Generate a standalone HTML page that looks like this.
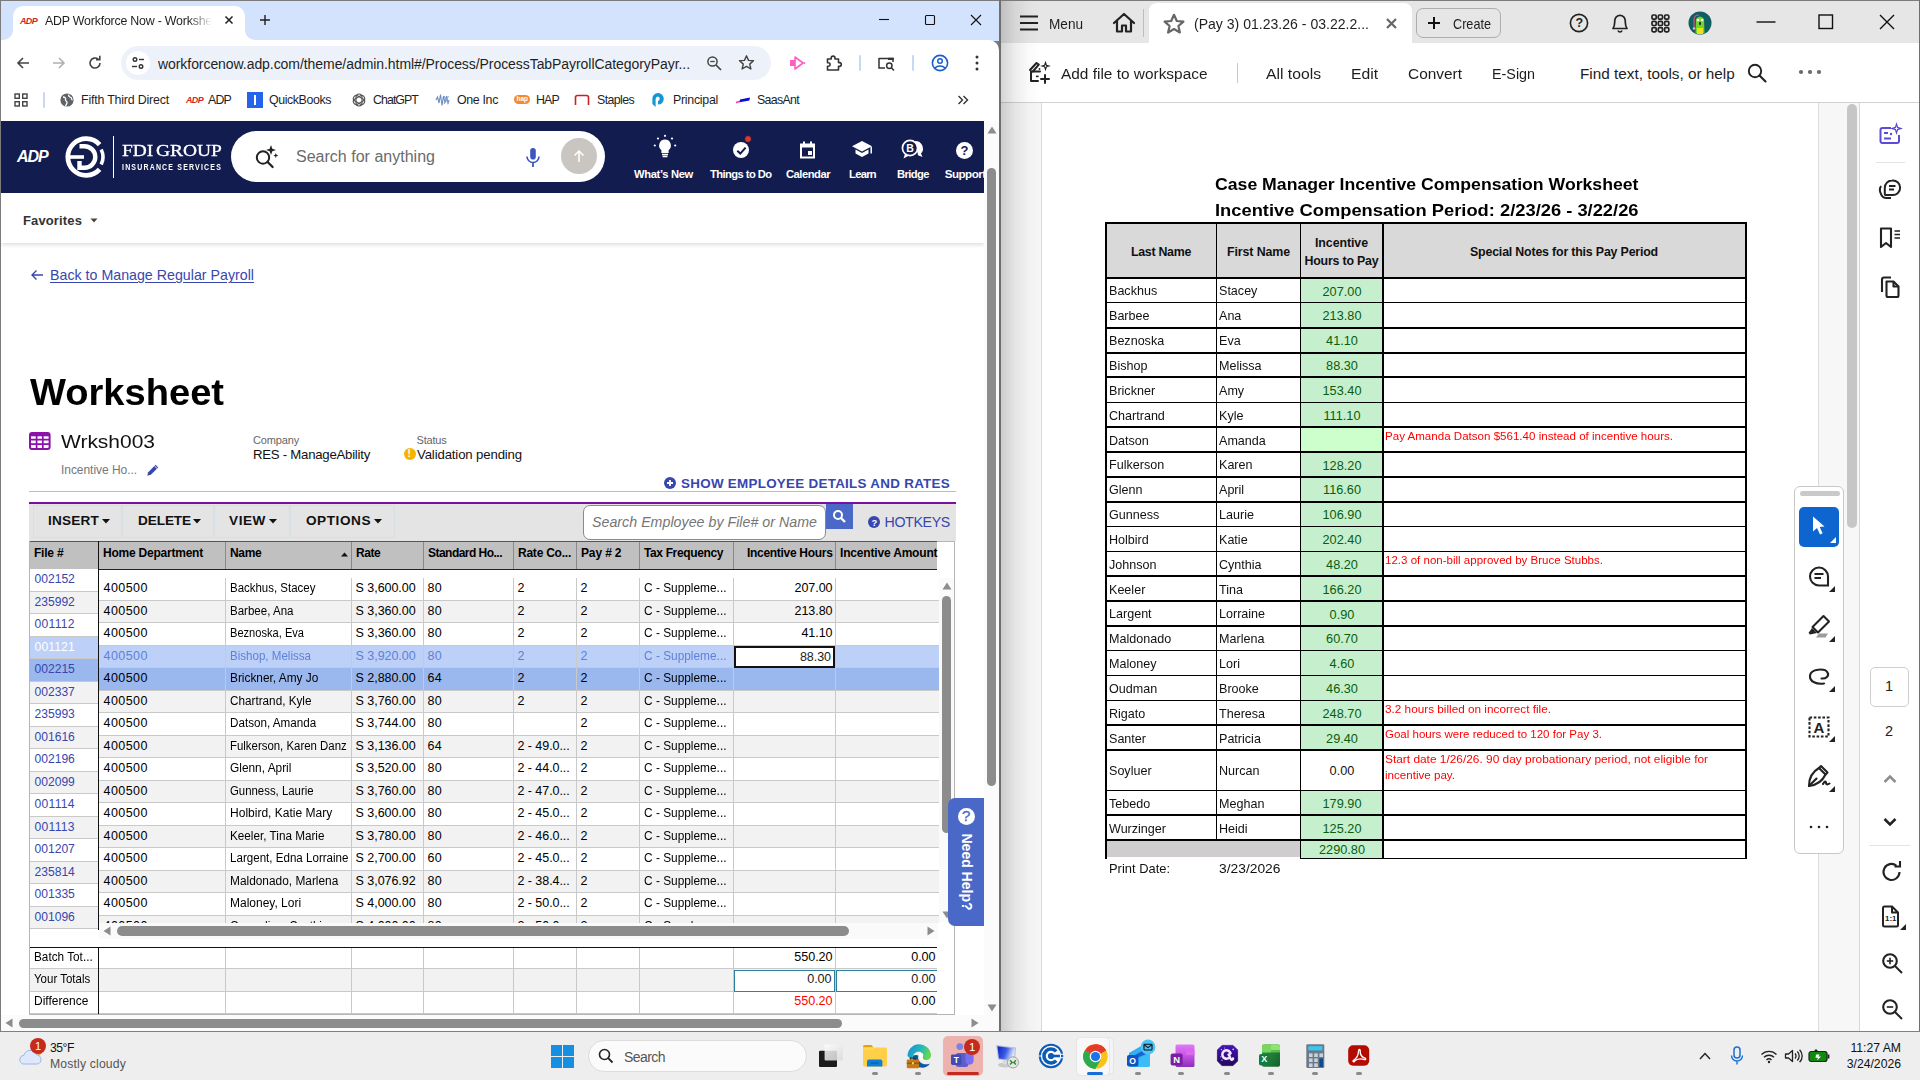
<!DOCTYPE html>
<html lang="en"><head><meta charset="utf-8"><title>ADP Workforce Now - Worksheet</title>
<style>
html,body{margin:0;padding:0;}
body{width:1920px;height:1080px;overflow:hidden;position:relative;background:#7b7b7b;font-family:"Liberation Sans",sans-serif;}
.b{position:absolute;box-sizing:border-box;}
div.b{box-sizing:content-box;}
.t{position:absolute;white-space:pre;}
svg.b{overflow:visible;}
</style></head><body>
<!-- chrome_top -->
<div class="b" style="left:0px;top:0px;width:1000px;height:41px;background:#d3e3fd;"></div>
<div class="b" style="left:1px;top:40px;width:998px;height:81px;background:#fff;border-radius:0 10px 0 0;"></div>
<div class="b" style="left:13px;top:6px;width:232px;height:35px;background:#fff;border-radius:10px 10px 0 0;"></div>
<svg class="b" style="left:3px;top:30px;" width="10" height="10" viewBox="0 0 10 10"><path d="M10 0 V10 H0 A10 10 0 0 0 10 0Z" fill="#fff"/></svg>
<svg class="b" style="left:245px;top:30px;" width="10" height="10" viewBox="0 0 10 10"><path d="M0 0 V10 H10 A10 10 0 0 1 0 0Z" fill="#fff"/></svg>
<svg class="b" style="left:224px;top:15px;" width="10" height="10" viewBox="0 0 10 10"><path d="M1.5 1.5 L8.5 8.5 M8.5 1.5 L1.5 8.5" stroke="#1f1f1f" stroke-width="1.5"/></svg>
<svg class="b" style="left:259px;top:14px;" width="12" height="12" viewBox="0 0 12 12"><path d="M6 1 V11 M1 6 H11" stroke="#1f1f1f" stroke-width="1.4"/></svg>
<svg class="b" style="left:878px;top:14px;" width="12" height="12" viewBox="0 0 12 12"><path d="M1 5.5 H11" stroke="#111" stroke-width="1.1"/></svg>
<svg class="b" style="left:924px;top:14px;" width="12" height="12" viewBox="0 0 12 12"><rect x="1.5" y="1.5" width="9" height="9" rx="1" fill="none" stroke="#111" stroke-width="1.1"/></svg>
<svg class="b" style="left:970px;top:14px;" width="12" height="12" viewBox="0 0 12 12"><path d="M1 1 L11 11 M11 1 L1 11" stroke="#111" stroke-width="1.1"/></svg>
<svg class="b" style="left:15px;top:55px;" width="16" height="16" viewBox="0 0 16 16"><path d="M14 8 H3 M8 3 L3 8 L8 13" fill="none" stroke="#444" stroke-width="1.6"/></svg>
<svg class="b" style="left:51px;top:55px;" width="16" height="16" viewBox="0 0 16 16"><path d="M2 8 H13 M8 3 L13 8 L8 13" fill="none" stroke="#b0b0b0" stroke-width="1.6"/></svg>
<svg class="b" style="left:87px;top:55px;" width="16" height="16" viewBox="0 0 16 16"><path d="M13 8 A5 5 0 1 1 11.2 4.2" fill="none" stroke="#444" stroke-width="1.6"/><path d="M9 4.6 H12.8 V0.8" fill="none" stroke="#444" stroke-width="1.6"/></svg>
<div class="b" style="left:121px;top:46px;width:650px;height:34px;background:#edf2fa;border-radius:17px;"></div>
<div class="b" style="left:126px;top:51px;width:24px;height:24px;background:#fff;border-radius:12px;"></div>
<svg class="b" style="left:131px;top:56px;" width="14" height="14" viewBox="0 0 14 14"><circle cx="4" cy="3.5" r="1.8" fill="none" stroke="#333" stroke-width="1.4"/><path d="M8 3.5 H13" stroke="#333" stroke-width="1.4"/><circle cx="10" cy="10.5" r="1.8" fill="none" stroke="#333" stroke-width="1.4"/><path d="M1 10.5 H6" stroke="#333" stroke-width="1.4"/></svg>
<svg class="b" style="left:706px;top:55px;" width="16" height="16" viewBox="0 0 16 16"><circle cx="6.5" cy="6.5" r="4.6" fill="none" stroke="#444" stroke-width="1.5"/><path d="M10 10 L15 15" stroke="#444" stroke-width="1.7"/><path d="M4.3 6.5 H8.7" stroke="#444" stroke-width="1.3"/></svg>
<svg class="b" style="left:738px;top:54px;" width="17" height="17" viewBox="0 0 17 17"><path d="M8.5 1.8 L10.5 6.4 L15.5 6.8 L11.7 10.1 L12.9 15 L8.5 12.4 L4.1 15 L5.3 10.1 L1.5 6.8 L6.5 6.4 Z" fill="none" stroke="#444" stroke-width="1.4" stroke-linejoin="round"/></svg>
<svg class="b" style="left:788px;top:55px;" width="18" height="16" viewBox="0 0 18 16"><path d="M2 5 H7 V11 H2 Z" fill="#ff5fc4"/><path d="M7 2 L15 8 L7 14 Z" fill="none" stroke="#ff5fc4" stroke-width="1.6" stroke-linejoin="round"/><circle cx="16.3" cy="8" r="1" fill="#ff5fc4"/></svg>
<svg class="b" style="left:825px;top:54px;" width="18" height="18" viewBox="0 0 18 18"><path d="M2.5 5 H6.2 V4 A1.9 1.9 0 0 1 10 4 V5 H13.5 V8.6 H14.4 A1.9 1.9 0 0 1 14.4 12.4 H13.5 V16 H2.5 V12.3 H3.3 A1.8 1.8 0 0 0 3.3 8.7 H2.5 Z" fill="none" stroke="#333" stroke-width="1.6" stroke-linejoin="round"/></svg>
<div class="b" style="left:859px;top:55px;width:2px;height:16px;background:#c7d7f5;border-radius:1px;"></div>
<svg class="b" style="left:877px;top:55px;" width="19" height="17" viewBox="0 0 19 17"><path d="M2 3.5 H16 V7" fill="none" stroke="#333" stroke-width="1.5"/><path d="M11 2.8 H16.7 V5 H11Z" fill="#333"/><path d="M2 3 V13 H8" fill="none" stroke="#333" stroke-width="1.5"/><circle cx="12.3" cy="10.7" r="2.7" fill="none" stroke="#333" stroke-width="1.5"/><path d="M14.3 12.7 L17 15.5" stroke="#333" stroke-width="1.5"/></svg>
<div class="b" style="left:912px;top:55px;width:2px;height:16px;background:#c7d7f5;border-radius:1px;"></div>
<svg class="b" style="left:931px;top:54px;" width="18" height="18" viewBox="0 0 18 18"><circle cx="9" cy="9" r="7.6" fill="none" stroke="#1a5fd0" stroke-width="1.6"/><circle cx="9" cy="7" r="2.3" fill="none" stroke="#1a5fd0" stroke-width="1.5"/><path d="M3.8 14 A6.5 5 0 0 1 14.2 14" fill="none" stroke="#1a5fd0" stroke-width="1.5"/></svg>
<svg class="b" style="left:974px;top:55px;" width="6" height="16" viewBox="0 0 6 16"><circle cx="3" cy="2" r="1.5" fill="#333"/><circle cx="3" cy="8" r="1.5" fill="#333"/><circle cx="3" cy="14" r="1.5" fill="#333"/></svg>
<svg class="b" style="left:14px;top:93px;" width="14" height="14" viewBox="0 0 14 14"><g fill="none" stroke="#444" stroke-width="1.4"><rect x="1" y="1" width="4.3" height="4.3"/><rect x="8.7" y="1" width="4.3" height="4.3"/><rect x="1" y="8.7" width="4.3" height="4.3"/><rect x="8.7" y="8.7" width="4.3" height="4.3"/></g></svg>
<div class="b" style="left:43px;top:92px;width:2px;height:16px;background:#c7d7f5;border-radius:1px;"></div>
<svg class="b" style="left:60px;top:93px;" width="14" height="14" viewBox="0 0 14 14"><circle cx="7" cy="7" r="6.6" fill="#5f6368"/><path d="M3 4 C5 4 6 5 5.5 6.5 C5 8 7 8 7 9.5 C7 11 6 12 5.5 13 M9 1.5 C8 3 9.5 4 11 4.5 C12 5 11 6.5 12.5 7" fill="none" stroke="#fff" stroke-width="1.3"/></svg>
<div class="b" style="left:247px;top:92px;width:16px;height:16px;background:#2563eb;"></div>
<div class="b" style="left:254px;top:95px;width:2px;height:10px;background:#fff;"></div>
<svg class="b" style="left:352px;top:93px;" width="14" height="14" viewBox="0 0 14 14"><g fill="none" stroke="#555" stroke-width="1.15"><rect x="4" y="1" width="6" height="12" rx="3"/><rect x="4" y="1" width="6" height="12" rx="3" transform="rotate(60 7 7)"/><rect x="4" y="1" width="6" height="12" rx="3" transform="rotate(120 7 7)"/></g></svg>
<svg class="b" style="left:435px;top:93px;" width="15" height="14" viewBox="0 0 15 14"><g fill="none" stroke="#6c8ebf" stroke-width="1.1"><path d="M1 7 L2.5 4 L4 10 L5.5 1.5 L7 12.5 L8.5 3 L10 10 L11.5 3 L13 10 L14 7"/><path d="M9 3 L13.5 11 M13.5 3 L9 11" stroke="#8fa9cf"/></g></svg>
<div class="b" style="left:514px;top:95px;width:16px;height:9px;background:#f28c28;border-radius:5px;"></div>
<svg class="b" style="left:574px;top:94px;" width="16" height="12" viewBox="0 0 16 12"><path d="M1.5 11 V3.5 Q1.5 1.5 3.5 1.5 H12.5 Q14.5 1.5 14.5 3.5 V11" fill="none" stroke="#cc1f1f" stroke-width="1.6"/></svg>
<svg class="b" style="left:651px;top:92px;" width="14" height="16" viewBox="0 0 14 16"><path d="M7 1 A5.8 5.8 0 0 1 7 12.6 L7 9 A2.4 2.4 0 0 0 7 4.4 A2.6 2.6 0 0 0 4.6 7 V15 L1.4 12 V6.8 A5.7 5.7 0 0 1 7 1 Z" fill="#1596d1"/></svg>
<svg class="b" style="left:735px;top:95px;" width="16" height="10" viewBox="0 0 16 10"><path d="M1 7.6 L5 6.2" stroke="#ff3db5" stroke-width="1.7"/><path d="M5 4.4 L15 2.6 L14.4 5.4 L4.6 7.2Z" fill="#0a0adc"/></svg>
<svg class="b" style="left:957px;top:95px;" width="12" height="10" viewBox="0 0 12 10"><path d="M1.5 1 L5.5 5 L1.5 9 M6.5 1 L10.5 5 L6.5 9" fill="none" stroke="#333" stroke-width="1.4"/></svg>
<span class="t" style="left:20px;top:16.50px;font:italic bold 9px/9px 'Liberation Sans',sans-serif;color:#d0271d;letter-spacing:-0.672px;">ADP</span>
<span class="t" style="left:45px;top:14.80px;font:normal normal 12.4px/12.4px 'Liberation Sans',sans-serif;color:#1f1f1f;letter-spacing:-0.216px;-webkit-mask-image:linear-gradient(90deg,#000 86%,transparent 100%);mask-image:linear-gradient(90deg,#000 86%,transparent 100%);">ADP Workforce Now - Workshe</span>
<span class="t" style="left:158px;top:56.50px;font:normal normal 14px/14px 'Liberation Sans',sans-serif;color:#1f1f1f;letter-spacing:-0.062px;">workforcenow.adp.com/theme/admin.html#/Process/ProcessTabPayrollCategoryPayr...</span>
<span class="t" style="left:81px;top:93.80px;font:normal normal 12.4px/12.4px 'Liberation Sans',sans-serif;color:#1f1f1f;letter-spacing:-0.187px;">Fifth Third Direct</span>
<span class="t" style="left:186px;top:95.50px;font:italic bold 9px/9px 'Liberation Sans',sans-serif;color:#d0271d;letter-spacing:-0.672px;">ADP</span>
<span class="t" style="left:208px;top:93.80px;font:normal normal 12.4px/12.4px 'Liberation Sans',sans-serif;color:#1f1f1f;letter-spacing:-0.828px;">ADP</span>
<span class="t" style="left:269px;top:93.80px;font:normal normal 12.4px/12.4px 'Liberation Sans',sans-serif;color:#1f1f1f;letter-spacing:-0.412px;">QuickBooks</span>
<span class="t" style="left:373px;top:93.80px;font:normal normal 12.4px/12.4px 'Liberation Sans',sans-serif;color:#1f1f1f;letter-spacing:-0.951px;">ChatGPT</span>
<span class="t" style="left:457px;top:93.80px;font:normal normal 12.4px/12.4px 'Liberation Sans',sans-serif;color:#1f1f1f;letter-spacing:-0.344px;">One Inc</span>
<span class="t" style="left:516.5px;top:96.05px;font:normal bold 6.5px/6.5px 'Liberation Sans',sans-serif;color:#fff;">hap</span>
<span class="t" style="left:536px;top:93.80px;font:normal normal 12.4px/12.4px 'Liberation Sans',sans-serif;color:#1f1f1f;letter-spacing:-0.828px;">HAP</span>
<span class="t" style="left:597px;top:93.80px;font:normal normal 12.4px/12.4px 'Liberation Sans',sans-serif;color:#1f1f1f;letter-spacing:-0.621px;">Staples</span>
<span class="t" style="left:673px;top:93.80px;font:normal normal 12.4px/12.4px 'Liberation Sans',sans-serif;color:#1f1f1f;letter-spacing:-0.281px;">Principal</span>
<span class="t" style="left:757px;top:93.80px;font:normal normal 12.4px/12.4px 'Liberation Sans',sans-serif;color:#1f1f1f;letter-spacing:-0.692px;">SaasAnt</span>
<!-- adp_head -->
<div class="b" style="left:1px;top:121px;width:998px;height:910px;background:#fff;"></div>
<div class="b" style="left:1px;top:121px;width:983px;height:72px;background:#121c4e;"></div>
<svg class="b" style="left:63.2px;top:135px;" width="44" height="44" viewBox="0 0 44 44"><g fill="none" stroke="#fff"><path d="M36.6 9.6 A18.3 18.3 0 1 0 36.6 34.4" stroke-width="4.8"/><path d="M38.2 14.5 A17 17 0 0 1 38.2 29.5" stroke-width="3.6"/><path d="M3.5 22 H21" stroke-width="3.6"/><path d="M16.5 11.2 H21.5 A10.8 10.8 0 0 1 21.5 32.8 H16.5 V26" stroke-width="4.4"/></g></svg>
<div class="b" style="left:113px;top:136px;width:1px;height:42px;background:#fff;"></div>
<div class="b" style="left:231px;top:131px;width:374px;height:51px;background:#fff;border-radius:26px;"></div>
<svg class="b" style="left:254px;top:144px;" width="26" height="26" viewBox="0 0 26 26"><circle cx="9" cy="13.5" r="6.2" fill="none" stroke="#222" stroke-width="2"/><path d="M13.6 18 L18.6 23" stroke="#222" stroke-width="2.3" stroke-linecap="round"/><path d="M17 1 L18.3 4.7 L22 6 L18.3 7.3 L17 11 L15.7 7.3 L12 6 L15.7 4.7 Z" fill="#222"/><path d="M21.8 9 L22.5 10.8 L24.3 11.5 L22.5 12.2 L21.8 14 L21.1 12.2 L19.3 11.5 L21.1 10.8 Z" fill="#222"/></svg>
<svg class="b" style="left:525px;top:147px;" width="16" height="22" viewBox="0 0 16 22"><rect x="5.2" y="1" width="5.6" height="11.5" rx="2.8" fill="#3d56c0"/><path d="M2 9.5 A6 6 0 0 0 14 9.5" fill="none" stroke="#3d56c0" stroke-width="1.6"/><path d="M8 15.5 V20" stroke="#3d56c0" stroke-width="1.8"/></svg>
<div class="b" style="left:561px;top:138px;width:36px;height:36px;background:#c9c5c1;border-radius:18px;"></div>
<svg class="b" style="left:571px;top:148px;" width="16" height="16" viewBox="0 0 16 16"><path d="M8 14 V3 M3.5 7.5 L8 3 L12.5 7.5" fill="none" stroke="#fff" stroke-width="1.5"/></svg>
<svg class="b" style="left:651.5px;top:134px;" width="26" height="28" viewBox="0 0 26 28"><path d="M13 5.5 A6 6 0 0 1 16.6 16.2 V19 H9.4 V16.2 A6 6 0 0 1 13 5.5Z" fill="#fff"/><path d="M10 20.5 H16 M10.6 22.5 H15.4" stroke="#fff" stroke-width="1.5"/><g fill="#fff"><circle cx="13" cy="1.8" r="1.1"/><circle cx="6" cy="4.5" r="1.1"/><circle cx="20" cy="4.5" r="1.1"/><circle cx="2.8" cy="11.5" r="1.1"/><circle cx="23.2" cy="11.5" r="1.1"/></g></svg>
<div class="b" style="left:732.5px;top:141.5px;width:16.5px;height:16.5px;background:#fff;border-radius:9px;"></div>
<svg class="b" style="left:732.5px;top:141.5px;" width="17" height="17" viewBox="0 0 17 17"><path d="M4.3 8.8 L7.3 11.6 L12.6 5.6" fill="none" stroke="#121c4e" stroke-width="2"/></svg>
<div class="b" style="left:743.6px;top:135.2px;width:8.2px;height:8.2px;background:#d93a2b;border-radius:5px;border:1px solid #121c4e;box-sizing:border-box;"></div>
<svg class="b" style="left:799px;top:141px;" width="17" height="18" viewBox="0 0 17 18"><path d="M2 3.5 H15 V16.5 H2 Z" fill="none" stroke="#fff" stroke-width="2"/><path d="M2 3 H15 V6.5 H2Z" fill="#fff"/><path d="M5 0.5 V4 M12 0.5 V4" stroke="#fff" stroke-width="2"/><rect x="9" y="10" width="4" height="4" fill="#fff"/></svg>
<svg class="b" style="left:851px;top:140px;" width="22" height="18" viewBox="0 0 22 18"><path d="M11 1 L21 6.3 L11 11.6 L1 6.3 Z" fill="#fff"/><path d="M4.5 9.5 V13.5 L11 17 L17.5 13.5 V9.5 L11 13 Z" fill="#fff"/><path d="M20.2 6.8 V13.5" stroke="#fff" stroke-width="1.5"/></svg>
<svg class="b" style="left:900px;top:138px;" width="24" height="22" viewBox="0 0 24 22"><path d="M15 3 A7.5 7.5 0 0 1 21 15.5 L22.5 19 L18 17.2" fill="#fff"/><circle cx="10" cy="10" r="7.6" fill="#121c4e" stroke="#fff" stroke-width="1.7"/><path d="M5 16 L3.5 20.5 L9 17.5" fill="#fff"/></svg>
<div class="b" style="left:956px;top:141.5px;width:17px;height:17px;background:#fff;border-radius:9px;"></div>
<div class="b" style="left:944px;top:165px;width:40px;height:18px;overflow:hidden;"><span class="t" style="left:0.7px;top:2.7px;font:bold 11.6px/11.6px 'Liberation Sans',sans-serif;color:#fff;letter-spacing:-0.5px;">Support</span></div>
<div class="b" style="left:1px;top:193px;width:983px;height:50px;background:#fff;box-shadow:0 2px 4px rgba(0,0,0,0.13);"></div>
<svg class="b" style="left:90px;top:218px;" width="8" height="5" viewBox="0 0 8 5"><path d="M0.5 0.5 H7.5 L4 4.5Z" fill="#444"/></svg>
<svg class="b" style="left:30px;top:269px;" width="14" height="12" viewBox="0 0 14 12"><path d="M13 6 H2 M6.5 1.5 L2 6 L6.5 10.5" fill="none" stroke="#3747ad" stroke-width="1.4"/></svg>
<svg class="b" style="left:29px;top:432px;" width="22" height="18" viewBox="0 0 22 18"><rect x="1" y="1" width="19.6" height="16" rx="2" fill="#fff" stroke="#8a12a8" stroke-width="2"/><path d="M1.5 3 H20.2" stroke="#8a12a8" stroke-width="2.6"/><path d="M1 7.6 H20.6 M1 12.2 H20.6 M7.6 4 V17 M13.8 4 V17" stroke="#8a12a8" stroke-width="1.7"/></svg>
<svg class="b" style="left:146px;top:463px;" width="14" height="14" viewBox="0 0 14 14"><path d="M1.2 12.8 L2.2 9.2 L9.6 1.8 L12.2 4.4 L4.8 11.8 Z" fill="#3747ad"/><path d="M8.6 3 L11 5.4" stroke="#fff" stroke-width="0.9"/></svg>
<div class="b" style="left:403.5px;top:448px;width:12px;height:12px;background:#f5b400;border-radius:6px;"></div>
<div class="b" style="left:664px;top:477px;width:12px;height:12px;background:#3747ad;border-radius:6px;"></div>
<svg class="b" style="left:664px;top:477px;" width="12" height="12" viewBox="0 0 12 12"><path d="M6 3 V9 M3 6 H9" stroke="#fff" stroke-width="1.8"/></svg>
<div class="b" style="left:29px;top:491px;width:927px;height:1px;background:#bdbdbd;"></div>
<div class="b" style="left:29px;top:502px;width:927px;height:2px;background:#7b0fa0;"></div>
<div class="b" style="left:29px;top:504px;width:927px;height:37px;background:#e4e4e4;"></div>
<div class="b" style="left:33px;top:505px;width:88.5px;height:33px;border:1px solid #d6e0e4;box-sizing:border-box;"></div>
<div class="b" style="left:122px;top:505px;width:91.5px;height:33px;border:1px solid #d6e0e4;box-sizing:border-box;"></div>
<div class="b" style="left:214px;top:505px;width:75.5px;height:33px;border:1px solid #d6e0e4;box-sizing:border-box;"></div>
<div class="b" style="left:290px;top:505px;width:104.7px;height:33px;border:1px solid #d6e0e4;box-sizing:border-box;"></div>
<svg class="b" style="left:102px;top:518.5px;" width="9" height="5.5" viewBox="0 0 9 5.5"><path d="M0 0 H8 L4 4.6Z" fill="#111"/></svg>
<svg class="b" style="left:193px;top:518.5px;" width="9" height="5.5" viewBox="0 0 9 5.5"><path d="M0 0 H8 L4 4.6Z" fill="#111"/></svg>
<svg class="b" style="left:269px;top:518.5px;" width="9" height="5.5" viewBox="0 0 9 5.5"><path d="M0 0 H8 L4 4.6Z" fill="#111"/></svg>
<svg class="b" style="left:374px;top:518.5px;" width="9" height="5.5" viewBox="0 0 9 5.5"><path d="M0 0 H8 L4 4.6Z" fill="#111"/></svg>
<div class="b" style="left:583px;top:504.6px;width:243px;height:35.2px;background:#fff;border:1px solid #8a8a8a;border-radius:7px;box-sizing:border-box;"></div>
<div class="b" style="left:826px;top:504px;width:27px;height:25px;background:#4a68c8;"></div>
<svg class="b" style="left:832px;top:509px;" width="15" height="15" viewBox="0 0 15 15"><circle cx="6" cy="6" r="4" fill="none" stroke="#fff" stroke-width="2"/><path d="M9 9 L13 13" stroke="#fff" stroke-width="2.4"/></svg>
<div class="b" style="left:868px;top:516px;width:12px;height:12px;background:#3747ad;border-radius:6px;"></div>
<div class="b" style="left:948px;top:798px;width:36px;height:128px;background:#4a68c8;border-radius:7px 0 0 7px;z-index:5;"></div>
<div class="b" style="left:957.5px;top:807.5px;width:17px;height:17px;background:#fff;border-radius:9px;z-index:6;"></div>
<span class="t" style="left:17px;top:149.00px;font:italic bold 16px/16px 'Liberation Sans',sans-serif;color:#fff;letter-spacing:-0.260px;letter-spacing:-1px;">ADP</span>
<span class="t" style="left:121.5px;top:141.90px;font:normal normal 17.4px/17.4px 'Liberation Serif',serif;color:#fff;transform:scaleX(1.1169);transform-origin:left center;-webkit-text-stroke:0.35px #fff;word-spacing:-2px;">FDI GROUP</span>
<span class="t" style="left:122px;top:161.60px;font:normal bold 9.4px/9.4px 'Liberation Sans',sans-serif;color:#fff;transform:scaleX(0.7441);transform-origin:left center;letter-spacing:1.6px;">INSURANCE SERVICES</span>
<span class="t" style="left:296px;top:149.00px;font:normal normal 16px/16px 'Liberation Sans',sans-serif;color:#6b6b6b;letter-spacing:0.013px;">Search for anything</span>
<span class="t" style="left:634px;top:168.50px;font:normal bold 11.2px/11.2px 'Liberation Sans',sans-serif;color:#fff;letter-spacing:-0.338px;">What’s New</span>
<span class="t" style="left:710px;top:168.50px;font:normal bold 11.2px/11.2px 'Liberation Sans',sans-serif;color:#fff;letter-spacing:-0.572px;">Things to Do</span>
<span class="t" style="left:786px;top:168.50px;font:normal bold 11.2px/11.2px 'Liberation Sans',sans-serif;color:#fff;letter-spacing:-0.484px;">Calendar</span>
<span class="t" style="left:849px;top:168.50px;font:normal bold 11.2px/11.2px 'Liberation Sans',sans-serif;color:#fff;letter-spacing:-0.694px;">Learn</span>
<span class="t" style="left:906.2px;top:142.95px;font:normal bold 10.5px/10.5px 'Liberation Sans',sans-serif;color:#fff;">B</span>
<span class="t" style="left:897px;top:168.50px;font:normal bold 11.2px/11.2px 'Liberation Sans',sans-serif;color:#fff;letter-spacing:-0.573px;">Bridge</span>
<span class="t" style="left:960.6px;top:143.80px;font:normal bold 13px/13px 'Liberation Sans',sans-serif;color:#121c4e;">?</span>
<span class="t" style="left:23px;top:214.00px;font:normal bold 13px/13px 'Liberation Sans',sans-serif;color:#333;letter-spacing:0.132px;">Favorites</span>
<span class="t" style="left:50px;top:268.40px;font:normal normal 14.2px/14.2px 'Liberation Sans',sans-serif;color:#3747ad;letter-spacing:0.018px;text-decoration:underline;text-underline-offset:2px;">Back to Manage Regular Payroll</span>
<span class="t" style="left:29.5px;top:374.70px;font:normal bold 36.6px/36.6px 'Liberation Sans',sans-serif;color:#000;transform:scaleX(1.0411);transform-origin:left center;">Worksheet</span>
<span class="t" style="left:61px;top:431.70px;font:normal normal 19.2px/19.2px 'Liberation Sans',sans-serif;color:#111;transform:scaleX(1.0926);transform-origin:left center;">Wrksh003</span>
<span class="t" style="left:61px;top:463.50px;font:normal normal 12px/12px 'Liberation Sans',sans-serif;color:#777;letter-spacing:-0.048px;">Incentive Ho...</span>
<span class="t" style="left:253px;top:435.00px;font:normal normal 11px/11px 'Liberation Sans',sans-serif;color:#666;letter-spacing:-0.154px;">Company</span>
<span class="t" style="left:253px;top:448.40px;font:normal normal 13.2px/13.2px 'Liberation Sans',sans-serif;color:#111;letter-spacing:-0.246px;">RES - ManageAbility</span>
<span class="t" style="left:416.5px;top:435.00px;font:normal normal 11px/11px 'Liberation Sans',sans-serif;color:#666;letter-spacing:-0.198px;">Status</span>
<span class="t" style="left:407.6px;top:449.30px;font:normal bold 10px/10px 'Liberation Sans',sans-serif;color:#fff;">!</span>
<span class="t" style="left:417px;top:448.40px;font:normal normal 13.2px/13.2px 'Liberation Sans',sans-serif;color:#111;letter-spacing:-0.141px;">Validation pending</span>
<span class="t" style="left:681px;top:476.80px;font:normal bold 13.4px/13.4px 'Liberation Sans',sans-serif;color:#3747ad;letter-spacing:0.286px;">SHOW EMPLOYEE DETAILS AND RATES</span>
<span class="t" style="left:48px;top:514.10px;font:normal bold 13.6px/13.6px 'Liberation Sans',sans-serif;color:#111;letter-spacing:0.190px;">INSERT</span>
<span class="t" style="left:138px;top:514.10px;font:normal bold 13.6px/13.6px 'Liberation Sans',sans-serif;color:#111;letter-spacing:-0.104px;">DELETE</span>
<span class="t" style="left:229px;top:514.10px;font:normal bold 13.6px/13.6px 'Liberation Sans',sans-serif;color:#111;letter-spacing:0.562px;">VIEW</span>
<span class="t" style="left:306px;top:514.10px;font:normal bold 13.6px/13.6px 'Liberation Sans',sans-serif;color:#111;letter-spacing:0.545px;">OPTIONS</span>
<span class="t" style="left:592px;top:514.90px;font:italic normal 14.2px/14.2px 'Liberation Sans',sans-serif;color:#757575;letter-spacing:0.033px;">Search Employee by File# or Name</span>
<span class="t" style="left:871.6px;top:517.55px;font:normal bold 9.5px/9.5px 'Liberation Sans',sans-serif;color:#fff;">?</span>
<span class="t" style="left:884.5px;top:514.90px;font:normal normal 14.2px/14.2px 'Liberation Sans',sans-serif;color:#3747ad;letter-spacing:-0.330px;">HOTKEYS</span>
<span class="t" style="left:966px;top:808.45px;transform:translateX(-50%);font:normal normal 15.5px/15.5px 'Liberation Sans',sans-serif;color:#4a68c8;z-index:7;-webkit-text-stroke:0.3px #4a68c8;">?</span>
<span class="t" style="left:966.5px;top:865.00px;font:normal bold 14px/14px 'Liberation Sans',sans-serif;color:#fff;transform:translate(-50%,0) rotate(90deg);transform-origin:center;z-index:7;">Need Help?</span>
<!-- adp_grid -->
<div class="b" style="left:29px;top:541px;width:926px;height:474px;border:1px solid #b5b5b5;box-sizing:border-box;"></div>
<div class="b" style="left:30px;top:541px;width:907px;height:29px;background:#c0c0c0;"></div>
<div class="b" style="left:225px;top:542px;width:1px;height:28px;background:#8a8a8a;"></div>
<div class="b" style="left:351px;top:542px;width:1px;height:28px;background:#8a8a8a;"></div>
<div class="b" style="left:423px;top:542px;width:1px;height:28px;background:#8a8a8a;"></div>
<div class="b" style="left:513px;top:542px;width:1px;height:28px;background:#8a8a8a;"></div>
<div class="b" style="left:576px;top:542px;width:1px;height:28px;background:#8a8a8a;"></div>
<div class="b" style="left:639px;top:542px;width:1px;height:28px;background:#8a8a8a;"></div>
<div class="b" style="left:733px;top:542px;width:1px;height:28px;background:#8a8a8a;"></div>
<div class="b" style="left:835px;top:542px;width:1px;height:28px;background:#8a8a8a;"></div>
<svg class="b" style="left:341px;top:552px;" width="7" height="5" viewBox="0 0 7 5"><path d="M0 4.5 H7 L3.5 0.5Z" fill="#111"/></svg>
<div class="b" style="left:30px;top:541px;width:907px;height:1px;background:#555;"></div>
<div class="b" style="left:30px;top:568.5px;width:907px;height:1.5px;background:#222;"></div>
<div class="b" style="left:30px;top:569.3px;width:68px;height:22.5px;background:#fff;border-bottom:1px solid #c9c9c9;box-sizing:border-box;"></div>
<div class="b" style="left:30px;top:591.8px;width:68px;height:22.5px;background:#f2f2f2;border-bottom:1px solid #c9c9c9;box-sizing:border-box;"></div>
<div class="b" style="left:30px;top:614.3px;width:68px;height:22.5px;background:#fff;border-bottom:1px solid #c9c9c9;box-sizing:border-box;"></div>
<div class="b" style="left:30px;top:636.8px;width:68px;height:22.5px;background:#bdd0f7;border-bottom:1px solid #c9c9c9;box-sizing:border-box;"></div>
<div class="b" style="left:30px;top:659.3px;width:68px;height:22.5px;background:#9ab7ee;border-bottom:1px solid #c9c9c9;box-sizing:border-box;"></div>
<div class="b" style="left:30px;top:681.8px;width:68px;height:22.5px;background:#f2f2f2;border-bottom:1px solid #c9c9c9;box-sizing:border-box;"></div>
<div class="b" style="left:30px;top:704.3px;width:68px;height:22.5px;background:#fff;border-bottom:1px solid #c9c9c9;box-sizing:border-box;"></div>
<div class="b" style="left:30px;top:726.8px;width:68px;height:22.5px;background:#f2f2f2;border-bottom:1px solid #c9c9c9;box-sizing:border-box;"></div>
<div class="b" style="left:30px;top:749.3px;width:68px;height:22.5px;background:#fff;border-bottom:1px solid #c9c9c9;box-sizing:border-box;"></div>
<div class="b" style="left:30px;top:771.8px;width:68px;height:22.5px;background:#f2f2f2;border-bottom:1px solid #c9c9c9;box-sizing:border-box;"></div>
<div class="b" style="left:30px;top:794.3px;width:68px;height:22.5px;background:#fff;border-bottom:1px solid #c9c9c9;box-sizing:border-box;"></div>
<div class="b" style="left:30px;top:816.8px;width:68px;height:22.5px;background:#f2f2f2;border-bottom:1px solid #c9c9c9;box-sizing:border-box;"></div>
<div class="b" style="left:30px;top:839.3px;width:68px;height:22.5px;background:#fff;border-bottom:1px solid #c9c9c9;box-sizing:border-box;"></div>
<div class="b" style="left:30px;top:861.8px;width:68px;height:22.5px;background:#f2f2f2;border-bottom:1px solid #c9c9c9;box-sizing:border-box;"></div>
<div class="b" style="left:30px;top:884.3px;width:68px;height:22.5px;background:#fff;border-bottom:1px solid #c9c9c9;box-sizing:border-box;"></div>
<div class="b" style="left:30px;top:906.8px;width:68px;height:22.5px;background:#f2f2f2;border-bottom:1px solid #c9c9c9;box-sizing:border-box;"></div>
<div class="b" style="left:99px;top:570px;width:840px;height:352.5px;overflow:hidden;"><div class="b" style="left:0px;top:8.3px;width:840px;height:22.5px;background:#fff;border-bottom:1px solid #c9c9c9;box-sizing:border-box;"></div><div class="b" style="left:0px;top:30.8px;width:840px;height:22.5px;background:#f2f2f2;border-bottom:1px solid #c9c9c9;box-sizing:border-box;"></div><div class="b" style="left:0px;top:53.3px;width:840px;height:22.5px;background:#fff;border-bottom:1px solid #c9c9c9;box-sizing:border-box;"></div><div class="b" style="left:0px;top:75.8px;width:840px;height:22.5px;background:#bdd0f7;border-bottom:1px solid #c9c9c9;box-sizing:border-box;"></div><div class="b" style="left:0px;top:98.3px;width:840px;height:22.5px;background:#9ab7ee;border-bottom:1px solid #c9c9c9;box-sizing:border-box;"></div><div class="b" style="left:0px;top:120.8px;width:840px;height:22.5px;background:#f2f2f2;border-bottom:1px solid #c9c9c9;box-sizing:border-box;"></div><div class="b" style="left:0px;top:143.3px;width:840px;height:22.5px;background:#fff;border-bottom:1px solid #c9c9c9;box-sizing:border-box;"></div><div class="b" style="left:0px;top:165.8px;width:840px;height:22.5px;background:#f2f2f2;border-bottom:1px solid #c9c9c9;box-sizing:border-box;"></div><div class="b" style="left:0px;top:188.3px;width:840px;height:22.5px;background:#fff;border-bottom:1px solid #c9c9c9;box-sizing:border-box;"></div><div class="b" style="left:0px;top:210.8px;width:840px;height:22.5px;background:#f2f2f2;border-bottom:1px solid #c9c9c9;box-sizing:border-box;"></div><div class="b" style="left:0px;top:233.3px;width:840px;height:22.5px;background:#fff;border-bottom:1px solid #c9c9c9;box-sizing:border-box;"></div><div class="b" style="left:0px;top:255.8px;width:840px;height:22.5px;background:#f2f2f2;border-bottom:1px solid #c9c9c9;box-sizing:border-box;"></div><div class="b" style="left:0px;top:278.3px;width:840px;height:22.5px;background:#fff;border-bottom:1px solid #c9c9c9;box-sizing:border-box;"></div><div class="b" style="left:0px;top:300.8px;width:840px;height:22.5px;background:#f2f2f2;border-bottom:1px solid #c9c9c9;box-sizing:border-box;"></div><div class="b" style="left:0px;top:323.3px;width:840px;height:22.5px;background:#fff;border-bottom:1px solid #c9c9c9;box-sizing:border-box;"></div><div class="b" style="left:0px;top:345.8px;width:840px;height:22.5px;background:#f2f2f2;border-bottom:1px solid #c9c9c9;box-sizing:border-box;"></div><div class="b" style="left:126px;top:8.3px;width:1px;height:360.0px;background:#c9c9c9;"></div><div class="b" style="left:252px;top:8.3px;width:1px;height:360.0px;background:#c9c9c9;"></div><div class="b" style="left:324px;top:8.3px;width:1px;height:360.0px;background:#c9c9c9;"></div><div class="b" style="left:414px;top:8.3px;width:1px;height:360.0px;background:#c9c9c9;"></div><div class="b" style="left:477px;top:8.3px;width:1px;height:360.0px;background:#c9c9c9;"></div><div class="b" style="left:540px;top:8.3px;width:1px;height:360.0px;background:#c9c9c9;"></div><div class="b" style="left:634px;top:8.3px;width:1px;height:360.0px;background:#c9c9c9;"></div><div class="b" style="left:736px;top:8.3px;width:1px;height:360.0px;background:#c9c9c9;"></div><div class="b" style="left:635px;top:76px;width:101px;height:22px;background:#fff;border:2px solid #111;box-sizing:border-box;"></div><span class="t" style="left:4.5px;top:12.25px;font:normal normal 12.5px/12.5px 'Liberation Sans',sans-serif;color:#000;letter-spacing:0.430px;">400500</span><span class="t" style="left:130.6px;top:12.25px;font:normal normal 12.5px/12.5px 'Liberation Sans',sans-serif;color:#000;transform:scaleX(0.9172);transform-origin:left center;">Backhus, Stacey</span><span class="t" style="left:256.6px;top:12.25px;font:normal normal 12.5px/12.5px 'Liberation Sans',sans-serif;color:#000;letter-spacing:-0.048px;">S 3,600.00</span><span class="t" style="left:328.6px;top:12.25px;font:normal normal 12.5px/12.5px 'Liberation Sans',sans-serif;color:#000;letter-spacing:0.197px;">80</span><span class="t" style="left:418.6px;top:12.25px;font:normal normal 12.5px/12.5px 'Liberation Sans',sans-serif;color:#000;letter-spacing:0.447px;">2</span><span class="t" style="left:481.6px;top:12.25px;font:normal normal 12.5px/12.5px 'Liberation Sans',sans-serif;color:#000;letter-spacing:0.447px;">2</span><span class="t" style="left:544.6px;top:12.25px;font:normal normal 12.5px/12.5px 'Liberation Sans',sans-serif;color:#000;transform:scaleX(0.9500);transform-origin:left center;">C - Suppleme...</span><span class="t" style="right:106.5px;top:12.25px;font:normal normal 12.5px/12.5px 'Liberation Sans',sans-serif;color:#000;letter-spacing:-0.051px;">207.00</span><span class="t" style="left:4.5px;top:34.75px;font:normal normal 12.5px/12.5px 'Liberation Sans',sans-serif;color:#000;letter-spacing:0.430px;">400500</span><span class="t" style="left:130.6px;top:34.75px;font:normal normal 12.5px/12.5px 'Liberation Sans',sans-serif;color:#000;transform:scaleX(0.9228);transform-origin:left center;">Barbee, Ana</span><span class="t" style="left:256.6px;top:34.75px;font:normal normal 12.5px/12.5px 'Liberation Sans',sans-serif;color:#000;letter-spacing:-0.048px;">S 3,360.00</span><span class="t" style="left:328.6px;top:34.75px;font:normal normal 12.5px/12.5px 'Liberation Sans',sans-serif;color:#000;letter-spacing:0.197px;">80</span><span class="t" style="left:418.6px;top:34.75px;font:normal normal 12.5px/12.5px 'Liberation Sans',sans-serif;color:#000;letter-spacing:0.447px;">2</span><span class="t" style="left:481.6px;top:34.75px;font:normal normal 12.5px/12.5px 'Liberation Sans',sans-serif;color:#000;letter-spacing:0.447px;">2</span><span class="t" style="left:544.6px;top:34.75px;font:normal normal 12.5px/12.5px 'Liberation Sans',sans-serif;color:#000;transform:scaleX(0.9500);transform-origin:left center;">C - Suppleme...</span><span class="t" style="right:106.5px;top:34.75px;font:normal normal 12.5px/12.5px 'Liberation Sans',sans-serif;color:#000;letter-spacing:-0.051px;">213.80</span><span class="t" style="left:4.5px;top:57.25px;font:normal normal 12.5px/12.5px 'Liberation Sans',sans-serif;color:#000;letter-spacing:0.430px;">400500</span><span class="t" style="left:130.6px;top:57.25px;font:normal normal 12.5px/12.5px 'Liberation Sans',sans-serif;color:#000;transform:scaleX(0.8874);transform-origin:left center;">Beznoska, Eva</span><span class="t" style="left:256.6px;top:57.25px;font:normal normal 12.5px/12.5px 'Liberation Sans',sans-serif;color:#000;letter-spacing:-0.048px;">S 3,360.00</span><span class="t" style="left:328.6px;top:57.25px;font:normal normal 12.5px/12.5px 'Liberation Sans',sans-serif;color:#000;letter-spacing:0.197px;">80</span><span class="t" style="left:418.6px;top:57.25px;font:normal normal 12.5px/12.5px 'Liberation Sans',sans-serif;color:#000;letter-spacing:0.447px;">2</span><span class="t" style="left:481.6px;top:57.25px;font:normal normal 12.5px/12.5px 'Liberation Sans',sans-serif;color:#000;letter-spacing:0.447px;">2</span><span class="t" style="left:544.6px;top:57.25px;font:normal normal 12.5px/12.5px 'Liberation Sans',sans-serif;color:#000;transform:scaleX(0.9500);transform-origin:left center;">C - Suppleme...</span><span class="t" style="right:106.5px;top:57.25px;font:normal normal 12.5px/12.5px 'Liberation Sans',sans-serif;color:#000;letter-spacing:-0.050px;">41.10</span><span class="t" style="left:4.5px;top:79.75px;font:normal normal 12.5px/12.5px 'Liberation Sans',sans-serif;color:#5f80d8;letter-spacing:0.430px;">400500</span><span class="t" style="left:130.6px;top:79.75px;font:normal normal 12.5px/12.5px 'Liberation Sans',sans-serif;color:#5f80d8;transform:scaleX(0.9252);transform-origin:left center;">Bishop, Melissa</span><span class="t" style="left:256.6px;top:79.75px;font:normal normal 12.5px/12.5px 'Liberation Sans',sans-serif;color:#5f80d8;letter-spacing:-0.048px;">S 3,920.00</span><span class="t" style="left:328.6px;top:79.75px;font:normal normal 12.5px/12.5px 'Liberation Sans',sans-serif;color:#5f80d8;letter-spacing:0.197px;">80</span><span class="t" style="left:418.6px;top:79.75px;font:normal normal 12.5px/12.5px 'Liberation Sans',sans-serif;color:#5f80d8;letter-spacing:0.447px;">2</span><span class="t" style="left:481.6px;top:79.75px;font:normal normal 12.5px/12.5px 'Liberation Sans',sans-serif;color:#5f80d8;letter-spacing:0.447px;">2</span><span class="t" style="left:544.6px;top:79.75px;font:normal normal 12.5px/12.5px 'Liberation Sans',sans-serif;color:#5f80d8;transform:scaleX(0.9500);transform-origin:left center;">C - Suppleme...</span><span class="t" style="left:4.5px;top:102.25px;font:normal normal 12.5px/12.5px 'Liberation Sans',sans-serif;color:#000;letter-spacing:0.430px;">400500</span><span class="t" style="left:130.6px;top:102.25px;font:normal normal 12.5px/12.5px 'Liberation Sans',sans-serif;color:#000;transform:scaleX(0.9485);transform-origin:left center;">Brickner, Amy Jo</span><span class="t" style="left:256.6px;top:102.25px;font:normal normal 12.5px/12.5px 'Liberation Sans',sans-serif;color:#000;letter-spacing:-0.048px;">S 2,880.00</span><span class="t" style="left:328.6px;top:102.25px;font:normal normal 12.5px/12.5px 'Liberation Sans',sans-serif;color:#000;letter-spacing:0.197px;">64</span><span class="t" style="left:418.6px;top:102.25px;font:normal normal 12.5px/12.5px 'Liberation Sans',sans-serif;color:#000;letter-spacing:0.447px;">2</span><span class="t" style="left:481.6px;top:102.25px;font:normal normal 12.5px/12.5px 'Liberation Sans',sans-serif;color:#000;letter-spacing:0.447px;">2</span><span class="t" style="left:544.6px;top:102.25px;font:normal normal 12.5px/12.5px 'Liberation Sans',sans-serif;color:#000;transform:scaleX(0.9500);transform-origin:left center;">C - Suppleme...</span><span class="t" style="left:4.5px;top:124.75px;font:normal normal 12.5px/12.5px 'Liberation Sans',sans-serif;color:#000;letter-spacing:0.430px;">400500</span><span class="t" style="left:130.6px;top:124.75px;font:normal normal 12.5px/12.5px 'Liberation Sans',sans-serif;color:#000;transform:scaleX(0.9383);transform-origin:left center;">Chartrand, Kyle</span><span class="t" style="left:256.6px;top:124.75px;font:normal normal 12.5px/12.5px 'Liberation Sans',sans-serif;color:#000;letter-spacing:-0.048px;">S 3,760.00</span><span class="t" style="left:328.6px;top:124.75px;font:normal normal 12.5px/12.5px 'Liberation Sans',sans-serif;color:#000;letter-spacing:0.197px;">80</span><span class="t" style="left:418.6px;top:124.75px;font:normal normal 12.5px/12.5px 'Liberation Sans',sans-serif;color:#000;letter-spacing:0.447px;">2</span><span class="t" style="left:481.6px;top:124.75px;font:normal normal 12.5px/12.5px 'Liberation Sans',sans-serif;color:#000;letter-spacing:0.447px;">2</span><span class="t" style="left:544.6px;top:124.75px;font:normal normal 12.5px/12.5px 'Liberation Sans',sans-serif;color:#000;transform:scaleX(0.9500);transform-origin:left center;">C - Suppleme...</span><span class="t" style="left:4.5px;top:147.25px;font:normal normal 12.5px/12.5px 'Liberation Sans',sans-serif;color:#000;letter-spacing:0.430px;">400500</span><span class="t" style="left:130.6px;top:147.25px;font:normal normal 12.5px/12.5px 'Liberation Sans',sans-serif;color:#000;transform:scaleX(0.9327);transform-origin:left center;">Datson, Amanda</span><span class="t" style="left:256.6px;top:147.25px;font:normal normal 12.5px/12.5px 'Liberation Sans',sans-serif;color:#000;letter-spacing:-0.048px;">S 3,744.00</span><span class="t" style="left:328.6px;top:147.25px;font:normal normal 12.5px/12.5px 'Liberation Sans',sans-serif;color:#000;letter-spacing:0.197px;">80</span><span class="t" style="left:481.6px;top:147.25px;font:normal normal 12.5px/12.5px 'Liberation Sans',sans-serif;color:#000;letter-spacing:0.447px;">2</span><span class="t" style="left:544.6px;top:147.25px;font:normal normal 12.5px/12.5px 'Liberation Sans',sans-serif;color:#000;transform:scaleX(0.9500);transform-origin:left center;">C - Suppleme...</span><span class="t" style="left:4.5px;top:169.75px;font:normal normal 12.5px/12.5px 'Liberation Sans',sans-serif;color:#000;letter-spacing:0.430px;">400500</span><span class="t" style="left:130.6px;top:169.75px;font:normal normal 12.5px/12.5px 'Liberation Sans',sans-serif;color:#000;transform:scaleX(0.9128);transform-origin:left center;">Fulkerson, Karen Danz</span><span class="t" style="left:256.6px;top:169.75px;font:normal normal 12.5px/12.5px 'Liberation Sans',sans-serif;color:#000;letter-spacing:-0.048px;">S 3,136.00</span><span class="t" style="left:328.6px;top:169.75px;font:normal normal 12.5px/12.5px 'Liberation Sans',sans-serif;color:#000;letter-spacing:0.197px;">64</span><span class="t" style="left:418.6px;top:169.75px;font:normal normal 12.5px/12.5px 'Liberation Sans',sans-serif;color:#000;letter-spacing:-0.072px;">2 - 49.0...</span><span class="t" style="left:481.6px;top:169.75px;font:normal normal 12.5px/12.5px 'Liberation Sans',sans-serif;color:#000;letter-spacing:0.447px;">2</span><span class="t" style="left:544.6px;top:169.75px;font:normal normal 12.5px/12.5px 'Liberation Sans',sans-serif;color:#000;transform:scaleX(0.9500);transform-origin:left center;">C - Suppleme...</span><span class="t" style="left:4.5px;top:192.25px;font:normal normal 12.5px/12.5px 'Liberation Sans',sans-serif;color:#000;letter-spacing:0.430px;">400500</span><span class="t" style="left:130.6px;top:192.25px;font:normal normal 12.5px/12.5px 'Liberation Sans',sans-serif;color:#000;transform:scaleX(0.9501);transform-origin:left center;">Glenn, April</span><span class="t" style="left:256.6px;top:192.25px;font:normal normal 12.5px/12.5px 'Liberation Sans',sans-serif;color:#000;letter-spacing:-0.048px;">S 3,520.00</span><span class="t" style="left:328.6px;top:192.25px;font:normal normal 12.5px/12.5px 'Liberation Sans',sans-serif;color:#000;letter-spacing:0.197px;">80</span><span class="t" style="left:418.6px;top:192.25px;font:normal normal 12.5px/12.5px 'Liberation Sans',sans-serif;color:#000;letter-spacing:-0.072px;">2 - 44.0...</span><span class="t" style="left:481.6px;top:192.25px;font:normal normal 12.5px/12.5px 'Liberation Sans',sans-serif;color:#000;letter-spacing:0.447px;">2</span><span class="t" style="left:544.6px;top:192.25px;font:normal normal 12.5px/12.5px 'Liberation Sans',sans-serif;color:#000;transform:scaleX(0.9500);transform-origin:left center;">C - Suppleme...</span><span class="t" style="left:4.5px;top:214.75px;font:normal normal 12.5px/12.5px 'Liberation Sans',sans-serif;color:#000;letter-spacing:0.430px;">400500</span><span class="t" style="left:130.6px;top:214.75px;font:normal normal 12.5px/12.5px 'Liberation Sans',sans-serif;color:#000;transform:scaleX(0.9113);transform-origin:left center;">Gunness, Laurie</span><span class="t" style="left:256.6px;top:214.75px;font:normal normal 12.5px/12.5px 'Liberation Sans',sans-serif;color:#000;letter-spacing:-0.048px;">S 3,760.00</span><span class="t" style="left:328.6px;top:214.75px;font:normal normal 12.5px/12.5px 'Liberation Sans',sans-serif;color:#000;letter-spacing:0.197px;">80</span><span class="t" style="left:418.6px;top:214.75px;font:normal normal 12.5px/12.5px 'Liberation Sans',sans-serif;color:#000;letter-spacing:-0.072px;">2 - 47.0...</span><span class="t" style="left:481.6px;top:214.75px;font:normal normal 12.5px/12.5px 'Liberation Sans',sans-serif;color:#000;letter-spacing:0.447px;">2</span><span class="t" style="left:544.6px;top:214.75px;font:normal normal 12.5px/12.5px 'Liberation Sans',sans-serif;color:#000;transform:scaleX(0.9500);transform-origin:left center;">C - Suppleme...</span><span class="t" style="left:4.5px;top:237.25px;font:normal normal 12.5px/12.5px 'Liberation Sans',sans-serif;color:#000;letter-spacing:0.430px;">400500</span><span class="t" style="left:130.6px;top:237.25px;font:normal normal 12.5px/12.5px 'Liberation Sans',sans-serif;color:#000;transform:scaleX(0.9624);transform-origin:left center;">Holbird, Katie Mary</span><span class="t" style="left:256.6px;top:237.25px;font:normal normal 12.5px/12.5px 'Liberation Sans',sans-serif;color:#000;letter-spacing:-0.048px;">S 3,600.00</span><span class="t" style="left:328.6px;top:237.25px;font:normal normal 12.5px/12.5px 'Liberation Sans',sans-serif;color:#000;letter-spacing:0.197px;">80</span><span class="t" style="left:418.6px;top:237.25px;font:normal normal 12.5px/12.5px 'Liberation Sans',sans-serif;color:#000;letter-spacing:-0.072px;">2 - 45.0...</span><span class="t" style="left:481.6px;top:237.25px;font:normal normal 12.5px/12.5px 'Liberation Sans',sans-serif;color:#000;letter-spacing:0.447px;">2</span><span class="t" style="left:544.6px;top:237.25px;font:normal normal 12.5px/12.5px 'Liberation Sans',sans-serif;color:#000;transform:scaleX(0.9500);transform-origin:left center;">C - Suppleme...</span><span class="t" style="left:4.5px;top:259.75px;font:normal normal 12.5px/12.5px 'Liberation Sans',sans-serif;color:#000;letter-spacing:0.430px;">400500</span><span class="t" style="left:130.6px;top:259.75px;font:normal normal 12.5px/12.5px 'Liberation Sans',sans-serif;color:#000;transform:scaleX(0.9380);transform-origin:left center;">Keeler, Tina Marie</span><span class="t" style="left:256.6px;top:259.75px;font:normal normal 12.5px/12.5px 'Liberation Sans',sans-serif;color:#000;letter-spacing:-0.048px;">S 3,780.00</span><span class="t" style="left:328.6px;top:259.75px;font:normal normal 12.5px/12.5px 'Liberation Sans',sans-serif;color:#000;letter-spacing:0.197px;">80</span><span class="t" style="left:418.6px;top:259.75px;font:normal normal 12.5px/12.5px 'Liberation Sans',sans-serif;color:#000;letter-spacing:-0.072px;">2 - 46.0...</span><span class="t" style="left:481.6px;top:259.75px;font:normal normal 12.5px/12.5px 'Liberation Sans',sans-serif;color:#000;letter-spacing:0.447px;">2</span><span class="t" style="left:544.6px;top:259.75px;font:normal normal 12.5px/12.5px 'Liberation Sans',sans-serif;color:#000;transform:scaleX(0.9500);transform-origin:left center;">C - Suppleme...</span><span class="t" style="left:4.5px;top:282.25px;font:normal normal 12.5px/12.5px 'Liberation Sans',sans-serif;color:#000;letter-spacing:0.430px;">400500</span><span class="t" style="left:130.6px;top:282.25px;font:normal normal 12.5px/12.5px 'Liberation Sans',sans-serif;color:#000;transform:scaleX(0.9267);transform-origin:left center;">Largent, Edna Lorraine</span><span class="t" style="left:256.6px;top:282.25px;font:normal normal 12.5px/12.5px 'Liberation Sans',sans-serif;color:#000;letter-spacing:-0.048px;">S 2,700.00</span><span class="t" style="left:328.6px;top:282.25px;font:normal normal 12.5px/12.5px 'Liberation Sans',sans-serif;color:#000;letter-spacing:0.197px;">60</span><span class="t" style="left:418.6px;top:282.25px;font:normal normal 12.5px/12.5px 'Liberation Sans',sans-serif;color:#000;letter-spacing:-0.072px;">2 - 45.0...</span><span class="t" style="left:481.6px;top:282.25px;font:normal normal 12.5px/12.5px 'Liberation Sans',sans-serif;color:#000;letter-spacing:0.447px;">2</span><span class="t" style="left:544.6px;top:282.25px;font:normal normal 12.5px/12.5px 'Liberation Sans',sans-serif;color:#000;transform:scaleX(0.9500);transform-origin:left center;">C - Suppleme...</span><span class="t" style="left:4.5px;top:304.75px;font:normal normal 12.5px/12.5px 'Liberation Sans',sans-serif;color:#000;letter-spacing:0.430px;">400500</span><span class="t" style="left:130.6px;top:304.75px;font:normal normal 12.5px/12.5px 'Liberation Sans',sans-serif;color:#000;transform:scaleX(0.9503);transform-origin:left center;">Maldonado, Marlena</span><span class="t" style="left:256.6px;top:304.75px;font:normal normal 12.5px/12.5px 'Liberation Sans',sans-serif;color:#000;letter-spacing:-0.048px;">S 3,076.92</span><span class="t" style="left:328.6px;top:304.75px;font:normal normal 12.5px/12.5px 'Liberation Sans',sans-serif;color:#000;letter-spacing:0.197px;">80</span><span class="t" style="left:418.6px;top:304.75px;font:normal normal 12.5px/12.5px 'Liberation Sans',sans-serif;color:#000;letter-spacing:-0.072px;">2 - 38.4...</span><span class="t" style="left:481.6px;top:304.75px;font:normal normal 12.5px/12.5px 'Liberation Sans',sans-serif;color:#000;letter-spacing:0.447px;">2</span><span class="t" style="left:544.6px;top:304.75px;font:normal normal 12.5px/12.5px 'Liberation Sans',sans-serif;color:#000;transform:scaleX(0.9500);transform-origin:left center;">C - Suppleme...</span><span class="t" style="left:4.5px;top:327.25px;font:normal normal 12.5px/12.5px 'Liberation Sans',sans-serif;color:#000;letter-spacing:0.430px;">400500</span><span class="t" style="left:130.6px;top:327.25px;font:normal normal 12.5px/12.5px 'Liberation Sans',sans-serif;color:#000;transform:scaleX(0.9594);transform-origin:left center;">Maloney, Lori</span><span class="t" style="left:256.6px;top:327.25px;font:normal normal 12.5px/12.5px 'Liberation Sans',sans-serif;color:#000;letter-spacing:-0.048px;">S 4,000.00</span><span class="t" style="left:328.6px;top:327.25px;font:normal normal 12.5px/12.5px 'Liberation Sans',sans-serif;color:#000;letter-spacing:0.197px;">80</span><span class="t" style="left:418.6px;top:327.25px;font:normal normal 12.5px/12.5px 'Liberation Sans',sans-serif;color:#000;letter-spacing:-0.072px;">2 - 50.0...</span><span class="t" style="left:481.6px;top:327.25px;font:normal normal 12.5px/12.5px 'Liberation Sans',sans-serif;color:#000;letter-spacing:0.447px;">2</span><span class="t" style="left:544.6px;top:327.25px;font:normal normal 12.5px/12.5px 'Liberation Sans',sans-serif;color:#000;transform:scaleX(0.9500);transform-origin:left center;">C - Suppleme...</span><span class="t" style="left:4.5px;top:349.75px;font:normal normal 12.5px/12.5px 'Liberation Sans',sans-serif;color:#000;letter-spacing:0.430px;">400500</span><span class="t" style="left:130.6px;top:349.75px;font:normal normal 12.5px/12.5px 'Liberation Sans',sans-serif;color:#000;transform:scaleX(0.9180);transform-origin:left center;">Oumedian, Cynthia</span><span class="t" style="left:256.6px;top:349.75px;font:normal normal 12.5px/12.5px 'Liberation Sans',sans-serif;color:#000;letter-spacing:-0.048px;">S 4,000.00</span><span class="t" style="left:328.6px;top:349.75px;font:normal normal 12.5px/12.5px 'Liberation Sans',sans-serif;color:#000;letter-spacing:0.197px;">80</span><span class="t" style="left:418.6px;top:349.75px;font:normal normal 12.5px/12.5px 'Liberation Sans',sans-serif;color:#000;letter-spacing:-0.072px;">2 - 50.0...</span><span class="t" style="left:481.6px;top:349.75px;font:normal normal 12.5px/12.5px 'Liberation Sans',sans-serif;color:#000;letter-spacing:0.447px;">2</span><span class="t" style="left:544.6px;top:349.75px;font:normal normal 12.5px/12.5px 'Liberation Sans',sans-serif;color:#000;transform:scaleX(0.9500);transform-origin:left center;">C - Suppleme...</span><span class="t" style="right:108px;top:80.75px;font:normal normal 12.5px/12.5px 'Liberation Sans',sans-serif;color:#222;letter-spacing:-0.050px;">88.30</span></div>
<div class="b" style="left:97.7px;top:541px;width:1.8px;height:389px;background:#111;"></div>
<div class="b" style="left:99px;top:922.5px;width:839px;height:16px;background:#fafafa;"></div>
<svg class="b" style="left:103px;top:925.5px;" width="8" height="10" viewBox="0 0 8 10"><path d="M7.5 0.5 V9.5 L0.5 5Z" fill="#8c8c8c"/></svg>
<svg class="b" style="left:927.2px;top:925.5px;" width="8" height="10" viewBox="0 0 8 10"><path d="M0.5 0.5 V9.5 L7.5 5Z" fill="#8c8c8c"/></svg>
<div class="b" style="left:117px;top:925.5px;width:732px;height:10px;background:#8c8c8c;border-radius:5px;"></div>
<div class="b" style="left:939px;top:578px;width:15px;height:344px;background:#fafafa;"></div>
<svg class="b" style="left:941.5px;top:582px;" width="10" height="8" viewBox="0 0 10 8"><path d="M0.5 7.5 H9.5 L5 0.5Z" fill="#8c8c8c"/></svg>
<svg class="b" style="left:941.5px;top:911px;" width="10" height="8" viewBox="0 0 10 8"><path d="M0.5 0.5 H9.5 L5 7.5Z" fill="#8c8c8c"/></svg>
<div class="b" style="left:942px;top:595.5px;width:9px;height:237px;background:#8c8c8c;border-radius:5px;"></div>
<div class="b" style="left:30px;top:946.9px;width:907px;height:1.3px;background:#111;"></div>
<div class="b" style="left:30px;top:948.2px;width:907px;height:20.8px;background:#fff;border-bottom:1px solid #c9c9c9;box-sizing:border-box;"></div>
<div class="b" style="left:30px;top:969px;width:907px;height:23px;background:#f2f2f2;border-bottom:1px solid #c9c9c9;box-sizing:border-box;"></div>
<div class="b" style="left:30px;top:992px;width:907px;height:22px;background:#fff;border-bottom:1px solid #c9c9c9;box-sizing:border-box;"></div>
<div class="b" style="left:225px;top:948.2px;width:1px;height:65.8px;background:#c9c9c9;"></div>
<div class="b" style="left:351px;top:948.2px;width:1px;height:65.8px;background:#c9c9c9;"></div>
<div class="b" style="left:423px;top:948.2px;width:1px;height:65.8px;background:#c9c9c9;"></div>
<div class="b" style="left:513px;top:948.2px;width:1px;height:65.8px;background:#c9c9c9;"></div>
<div class="b" style="left:576px;top:948.2px;width:1px;height:65.8px;background:#c9c9c9;"></div>
<div class="b" style="left:639px;top:948.2px;width:1px;height:65.8px;background:#c9c9c9;"></div>
<div class="b" style="left:733px;top:948.2px;width:1px;height:65.8px;background:#c9c9c9;"></div>
<div class="b" style="left:835px;top:948.2px;width:1px;height:65.8px;background:#c9c9c9;"></div>
<div class="b" style="left:734px;top:969.5px;width:101px;height:22.2px;background:#fff;border:1px solid #2c7f9e;box-sizing:border-box;"></div>
<div class="b" style="left:836px;top:969.5px;width:101px;height:22.2px;background:#fff;border:1px solid #2c7f9e;border-right:none;box-sizing:border-box;"></div>
<div class="b" style="left:97.7px;top:947px;width:1.8px;height:67px;background:#111;"></div>
<div class="b" style="left:1px;top:1015px;width:983px;height:16px;background:#fbfbfb;"></div>
<svg class="b" style="left:5px;top:1018px;" width="8" height="10" viewBox="0 0 8 10"><path d="M7.5 0.5 V9.5 L0.5 5Z" fill="#8c8c8c"/></svg>
<svg class="b" style="left:971px;top:1018px;" width="8" height="10" viewBox="0 0 8 10"><path d="M0.5 0.5 V9.5 L7.5 5Z" fill="#8c8c8c"/></svg>
<div class="b" style="left:19px;top:1019.2px;width:823px;height:8.6px;background:#8c8c8c;border-radius:5px;"></div>
<div class="b" style="left:984px;top:121px;width:15px;height:910px;background:#fbfbfb;"></div>
<svg class="b" style="left:987px;top:126px;" width="10" height="8" viewBox="0 0 10 8"><path d="M0.5 7.5 H9.5 L5 0.5Z" fill="#8c8c8c"/></svg>
<svg class="b" style="left:987px;top:1003.5px;" width="10" height="8" viewBox="0 0 10 8"><path d="M0.5 0.5 H9.5 L5 7.5Z" fill="#8c8c8c"/></svg>
<div class="b" style="left:987px;top:168px;width:9px;height:618px;background:#8c8c8c;border-radius:5px;"></div>
<span class="t" style="left:34px;top:547.00px;font:normal bold 12px/12px 'Liberation Sans',sans-serif;color:#000;letter-spacing:-0.215px;">File #</span>
<span class="t" style="left:103px;top:547.00px;font:normal bold 12px/12px 'Liberation Sans',sans-serif;color:#000;letter-spacing:-0.224px;">Home Department</span>
<span class="t" style="left:230px;top:547.00px;font:normal bold 12px/12px 'Liberation Sans',sans-serif;color:#000;letter-spacing:-0.297px;">Name</span>
<span class="t" style="left:356px;top:547.00px;font:normal bold 12px/12px 'Liberation Sans',sans-serif;color:#000;letter-spacing:-0.454px;">Rate</span>
<span class="t" style="left:428px;top:547.00px;font:normal bold 12px/12px 'Liberation Sans',sans-serif;color:#000;letter-spacing:-0.525px;">Standard Ho...</span>
<span class="t" style="left:518px;top:547.00px;font:normal bold 12px/12px 'Liberation Sans',sans-serif;color:#000;letter-spacing:-0.234px;">Rate Co...</span>
<span class="t" style="left:581px;top:547.00px;font:normal bold 12px/12px 'Liberation Sans',sans-serif;color:#000;letter-spacing:-0.139px;">Pay # 2</span>
<span class="t" style="left:644px;top:547.00px;font:normal bold 12px/12px 'Liberation Sans',sans-serif;color:#000;letter-spacing:-0.370px;">Tax Frequency</span>
<span class="t" style="right:1087.4px;top:547.00px;font:normal bold 12px/12px 'Liberation Sans',sans-serif;color:#000;letter-spacing:-0.289px;">Incentive Hours</span>
<span class="t" style="left:840px;top:547.00px;font:normal bold 12px/12px 'Liberation Sans',sans-serif;color:#000;letter-spacing:-0.177px;">Incentive Amount</span>
<span class="t" style="left:34.6px;top:573.05px;font:normal normal 12.1px/12.1px 'Liberation Sans',sans-serif;color:#3747ad;letter-spacing:-0.027px;">002152</span>
<span class="t" style="left:34.6px;top:595.55px;font:normal normal 12.1px/12.1px 'Liberation Sans',sans-serif;color:#3747ad;letter-spacing:-0.027px;">235992</span>
<span class="t" style="left:34.6px;top:618.05px;font:normal normal 12.1px/12.1px 'Liberation Sans',sans-serif;color:#3747ad;letter-spacing:0.273px;">001112</span>
<span class="t" style="left:34.6px;top:640.55px;font:normal normal 12.1px/12.1px 'Liberation Sans',sans-serif;color:#fff;letter-spacing:0.122px;">001121</span>
<span class="t" style="left:34.6px;top:663.05px;font:normal normal 12.1px/12.1px 'Liberation Sans',sans-serif;color:#3747ad;letter-spacing:-0.027px;">002215</span>
<span class="t" style="left:34.6px;top:685.55px;font:normal normal 12.1px/12.1px 'Liberation Sans',sans-serif;color:#3747ad;letter-spacing:-0.027px;">002337</span>
<span class="t" style="left:34.6px;top:708.05px;font:normal normal 12.1px/12.1px 'Liberation Sans',sans-serif;color:#3747ad;letter-spacing:-0.027px;">235993</span>
<span class="t" style="left:34.6px;top:730.55px;font:normal normal 12.1px/12.1px 'Liberation Sans',sans-serif;color:#3747ad;letter-spacing:-0.027px;">001616</span>
<span class="t" style="left:34.6px;top:753.05px;font:normal normal 12.1px/12.1px 'Liberation Sans',sans-serif;color:#3747ad;letter-spacing:-0.027px;">002196</span>
<span class="t" style="left:34.6px;top:775.55px;font:normal normal 12.1px/12.1px 'Liberation Sans',sans-serif;color:#3747ad;letter-spacing:-0.027px;">002099</span>
<span class="t" style="left:34.6px;top:798.05px;font:normal normal 12.1px/12.1px 'Liberation Sans',sans-serif;color:#3747ad;letter-spacing:0.273px;">001114</span>
<span class="t" style="left:34.6px;top:820.55px;font:normal normal 12.1px/12.1px 'Liberation Sans',sans-serif;color:#3747ad;letter-spacing:0.273px;">001113</span>
<span class="t" style="left:34.6px;top:843.05px;font:normal normal 12.1px/12.1px 'Liberation Sans',sans-serif;color:#3747ad;letter-spacing:-0.027px;">001207</span>
<span class="t" style="left:34.6px;top:865.55px;font:normal normal 12.1px/12.1px 'Liberation Sans',sans-serif;color:#3747ad;letter-spacing:-0.027px;">235814</span>
<span class="t" style="left:34.6px;top:888.05px;font:normal normal 12.1px/12.1px 'Liberation Sans',sans-serif;color:#3747ad;letter-spacing:-0.027px;">001335</span>
<span class="t" style="left:34.6px;top:910.55px;font:normal normal 12.1px/12.1px 'Liberation Sans',sans-serif;color:#3747ad;letter-spacing:-0.027px;">001096</span>
<span class="t" style="left:34.4px;top:950.70px;font:normal normal 12.6px/12.6px 'Liberation Sans',sans-serif;color:#000;transform:scaleX(0.9350);transform-origin:left center;">Batch Tot...</span>
<span class="t" style="left:34.4px;top:972.50px;font:normal normal 12.6px/12.6px 'Liberation Sans',sans-serif;color:#000;transform:scaleX(0.9120);transform-origin:left center;">Your Totals</span>
<span class="t" style="left:34.4px;top:994.70px;font:normal normal 12.6px/12.6px 'Liberation Sans',sans-serif;color:#000;transform:scaleX(0.9515);transform-origin:left center;">Difference</span>
<span class="t" style="right:1087.5px;top:950.70px;font:normal normal 12.6px/12.6px 'Liberation Sans',sans-serif;color:#000;letter-spacing:-0.064px;">550.20</span>
<span class="t" style="right:984.5px;top:950.70px;font:normal normal 12.6px/12.6px 'Liberation Sans',sans-serif;color:#000;letter-spacing:-0.061px;">0.00</span>
<span class="t" style="right:1088.5px;top:972.70px;font:normal normal 12.6px/12.6px 'Liberation Sans',sans-serif;color:#222;letter-spacing:-0.061px;">0.00</span>
<span class="t" style="right:984.5px;top:972.70px;font:normal normal 12.6px/12.6px 'Liberation Sans',sans-serif;color:#222;letter-spacing:-0.061px;">0.00</span>
<span class="t" style="right:1087.5px;top:994.70px;font:normal normal 12.6px/12.6px 'Liberation Sans',sans-serif;color:#ff0000;letter-spacing:-0.064px;">550.20</span>
<span class="t" style="right:984.5px;top:994.70px;font:normal normal 12.6px/12.6px 'Liberation Sans',sans-serif;color:#000;letter-spacing:-0.061px;">0.00</span>
<!-- acro_top -->
<div class="b" style="left:1001px;top:1px;width:919px;height:42px;background:#e6e6e6;"></div>
<div class="b" style="left:1149px;top:3px;width:263px;height:40px;background:#fff;border-radius:8px 8px 0 0;"></div>
<div class="b" style="left:1001px;top:43px;width:919px;height:59px;background:#fff;"></div>
<div class="b" style="left:1001px;top:102px;width:919px;height:1px;background:#d2d2d2;"></div>
<svg class="b" style="left:1020px;top:15px;" width="18" height="16" viewBox="0 0 18 16"><path d="M0 1.5 H18 M0 8 H18 M0 14.5 H18" stroke="#222" stroke-width="2"/></svg>
<svg class="b" style="left:1112px;top:12px;" width="24" height="22" viewBox="0 0 24 22"><path d="M2 11 L12 2 L22 11 M5 9 V19.5 H10 V13.5 H14 V19.5 H19 V9" fill="none" stroke="#222" stroke-width="2.2" stroke-linejoin="round" stroke-linecap="round"/></svg>
<div class="b" style="left:1143px;top:9px;width:1px;height:28px;background:#bdbdbd;"></div>
<svg class="b" style="left:1163px;top:13px;" width="22" height="21" viewBox="0 0 22 21"><path d="M11 1.8 L13.8 8 L20.4 8.6 L15.4 13 L16.9 19.5 L11 16 L5.1 19.5 L6.6 13 L1.6 8.6 L8.2 8 Z" fill="none" stroke="#666" stroke-width="2.2" stroke-linejoin="round"/></svg>
<svg class="b" style="left:1385.7px;top:17.6px;" width="11" height="11" viewBox="0 0 11 11"><path d="M1 1 L10 10 M10 1 L1 10" stroke="#666" stroke-width="2.2"/></svg>
<div class="b" style="left:1416px;top:8px;width:85px;height:30px;background:#e6e6e6;border:1px solid #adadad;border-radius:7px;box-sizing:border-box;"></div>
<svg class="b" style="left:1428px;top:17px;" width="12" height="12" viewBox="0 0 12 12"><path d="M6 0 V12 M0 6 H12" stroke="#111" stroke-width="2"/></svg>
<svg class="b" style="left:1569px;top:13px;" width="20" height="20" viewBox="0 0 20 20"><circle cx="10" cy="10" r="8.6" fill="none" stroke="#222" stroke-width="1.6"/></svg>
<svg class="b" style="left:1610px;top:12px;" width="20" height="22" viewBox="0 0 20 22"><path d="M3 16.5 C5 14 4.5 11 4.8 8.5 A5.2 5.2 0 0 1 15.2 8.5 C15.5 11 15 14 17 16.5 Z" fill="none" stroke="#222" stroke-width="1.7" stroke-linejoin="round"/><path d="M8 18.6 A2.1 2.1 0 0 0 12 18.6" fill="none" stroke="#222" stroke-width="1.6"/></svg>
<svg class="b" style="left:1650.5px;top:13.5px;" width="18" height="18" viewBox="0 0 18 18"><rect x="1.0" y="1.0" width="4.2" height="4.2" rx="1.2" fill="none" stroke="#222" stroke-width="1.7"/><rect x="7.3" y="1.0" width="4.2" height="4.2" rx="1.2" fill="none" stroke="#222" stroke-width="1.7"/><rect x="13.6" y="1.0" width="4.2" height="4.2" rx="1.2" fill="none" stroke="#222" stroke-width="1.7"/><rect x="1.0" y="7.3" width="4.2" height="4.2" rx="1.2" fill="none" stroke="#222" stroke-width="1.7"/><rect x="7.3" y="7.3" width="4.2" height="4.2" rx="1.2" fill="none" stroke="#222" stroke-width="1.7"/><rect x="13.6" y="7.3" width="4.2" height="4.2" rx="1.2" fill="none" stroke="#222" stroke-width="1.7"/><rect x="1.0" y="13.6" width="4.2" height="4.2" rx="1.2" fill="none" stroke="#222" stroke-width="1.7"/><rect x="7.3" y="13.6" width="4.2" height="4.2" rx="1.2" fill="none" stroke="#222" stroke-width="1.7"/><rect x="13.6" y="13.6" width="4.2" height="4.2" rx="1.2" fill="none" stroke="#222" stroke-width="1.7"/></svg>
<svg class="b" style="left:1688px;top:11px;" width="24" height="24" viewBox="0 0 24 24"><circle cx="12" cy="12" r="11.5" fill="#0f5e63"/><path d="M8 8 Q12 3 16 8 L16.5 22 Q12 24 7.5 22 Z" fill="#6fd62a"/><path d="M9 17 H15 V23 H9Z" fill="#e9e21a"/><circle cx="10" cy="9" r="1.3" fill="#fff"/><circle cx="14" cy="9" r="1.3" fill="#fff"/><ellipse cx="12" cy="12.5" rx="1" ry="1.8" fill="#222"/><path d="M6 17 V9 Q6 4 11 4" fill="none" stroke="#e54b7b" stroke-width="1.2"/><circle cx="6" cy="17.5" r="1.3" fill="#f2a6c8"/></svg>
<svg class="b" style="left:1756px;top:16px;" width="20" height="12" viewBox="0 0 20 12"><path d="M0.5 6 H19.5" stroke="#111" stroke-width="1.4"/></svg>
<svg class="b" style="left:1818px;top:14px;" width="16" height="16" viewBox="0 0 16 16"><rect x="1" y="1" width="13.5" height="13.5" fill="none" stroke="#111" stroke-width="1.4"/></svg>
<svg class="b" style="left:1879px;top:14px;" width="16" height="16" viewBox="0 0 16 16"><path d="M1 1 L15 15 M15 1 L1 15" stroke="#111" stroke-width="1.4"/></svg>
<svg class="b" style="left:1028px;top:61px;" width="24" height="24" viewBox="0 0 24 24"><g fill="none" stroke="#222" stroke-width="2" stroke-linejoin="round" stroke-linecap="round"><path d="M2 9 L8.5 2 L10.8 3.6 L4.8 10.5"/><path d="M3 10.5 V20 H10"/><path d="M3 10.5 H12"/><path d="M13 18 H21 M17 14 V22"/></g><path d="M17.5 1.5 L18.4 4.2 L21 5 L18.4 5.8 L17.5 8.5 L16.6 5.8 L14 5 L16.6 4.2Z" fill="none" stroke="#222" stroke-width="1.1"/><circle cx="11.5" cy="8" r="0.9" fill="#222"/><rect x="8" y="14.6" width="2.6" height="1.6" fill="#222"/></svg>
<div class="b" style="left:1237px;top:63px;width:1px;height:20px;background:#c9c9c9;"></div>
<svg class="b" style="left:1747px;top:63px;" width="20" height="20" viewBox="0 0 20 20"><circle cx="8" cy="8" r="6.2" fill="none" stroke="#222" stroke-width="1.9"/><path d="M12.5 12.5 L18.5 18.5" stroke="#222" stroke-width="2.1" stroke-linecap="round"/></svg>
<svg class="b" style="left:1798px;top:69px;" width="24" height="6" viewBox="0 0 24 6"><circle cx="3" cy="3" r="2.1" fill="#6a6a6a"/><circle cx="12" cy="3" r="2.1" fill="#6a6a6a"/><circle cx="21" cy="3" r="2.1" fill="#6a6a6a"/></svg>
<span class="t" style="left:1048.5px;top:17.10px;font:normal normal 14.2px/14.2px 'Liberation Sans',sans-serif;color:#1e1e1e;transform:scaleX(0.9577);transform-origin:left center;">Menu</span>
<span class="t" style="left:1194px;top:16.40px;font:normal normal 15px/15px 'Liberation Sans',sans-serif;color:#1e1e1e;transform:scaleX(0.9368);transform-origin:left center;">(Pay 3) 01.23.26 - 03.22.2...</span>
<span class="t" style="left:1453.4px;top:16.80px;font:normal normal 14.2px/14.2px 'Liberation Sans',sans-serif;color:#1e1e1e;transform:scaleX(0.8921);transform-origin:left center;">Create</span>
<span class="t" style="left:1575.5px;top:17.05px;font:normal bold 12.5px/12.5px 'Liberation Sans',sans-serif;color:#222;">?</span>
<span class="t" style="left:1060.5px;top:66.35px;font:normal normal 15.3px/15.3px 'Liberation Sans',sans-serif;color:#1e1e1e;transform:scaleX(1.0075);transform-origin:left center;">Add file to workspace</span>
<span class="t" style="left:1266px;top:66.35px;font:normal normal 15.3px/15.3px 'Liberation Sans',sans-serif;color:#1e1e1e;transform:scaleX(1.0268);transform-origin:left center;">All tools</span>
<span class="t" style="left:1351px;top:66.35px;font:normal normal 15.3px/15.3px 'Liberation Sans',sans-serif;color:#1e1e1e;transform:scaleX(1.0243);transform-origin:left center;">Edit</span>
<span class="t" style="left:1408px;top:66.35px;font:normal normal 15.3px/15.3px 'Liberation Sans',sans-serif;color:#1e1e1e;transform:scaleX(1.0082);transform-origin:left center;">Convert</span>
<span class="t" style="left:1492px;top:66.35px;font:normal normal 15.3px/15.3px 'Liberation Sans',sans-serif;color:#1e1e1e;transform:scaleX(0.9364);transform-origin:left center;">E-Sign</span>
<span class="t" style="left:1580px;top:66.35px;font:normal normal 15.3px/15.3px 'Liberation Sans',sans-serif;color:#1e1e1e;">Find text, tools, or help</span>
<!-- acro_doc -->
<div class="b" style="left:1001px;top:103px;width:41px;height:928px;background:#f6f6f6;"></div>
<div class="b" style="left:1041px;top:103px;width:1px;height:928px;background:#d9d9d9;"></div>
<div class="b" style="left:1042px;top:103px;width:776px;height:928px;background:#fff;"></div>
<div class="b" style="left:1818px;top:103px;width:41px;height:928px;background:#f7f7f7;border-left:1px solid #dcdcdc;box-sizing:border-box;"></div>
<div class="b" style="left:1847px;top:104px;width:10px;height:424px;background:#c6c6c6;border-radius:5px;"></div>
<div class="b" style="left:1859px;top:103px;width:61px;height:928px;background:#fff;border-left:1px solid #d6d6d6;box-sizing:border-box;"></div>
<div class="b" style="left:1106px;top:223px;width:639px;height:55px;background:#d9d9d9;"></div>
<div class="b" style="left:1300px;top:278.0px;width:83px;height:24.84px;background:#c6efce;"></div>
<div class="b" style="left:1300px;top:302.84px;width:83px;height:24.84px;background:#c6efce;"></div>
<div class="b" style="left:1300px;top:327.68px;width:83px;height:24.84px;background:#c6efce;"></div>
<div class="b" style="left:1300px;top:352.52px;width:83px;height:24.84px;background:#c6efce;"></div>
<div class="b" style="left:1300px;top:377.36px;width:83px;height:24.84px;background:#c6efce;"></div>
<div class="b" style="left:1300px;top:402.2px;width:83px;height:24.84px;background:#c6efce;"></div>
<div class="b" style="left:1300px;top:427.03999999999996px;width:83px;height:24.84px;background:#ccffcc;"></div>
<div class="b" style="left:1300px;top:451.88px;width:83px;height:24.84px;background:#c6efce;"></div>
<div class="b" style="left:1300px;top:476.72px;width:83px;height:24.84px;background:#c6efce;"></div>
<div class="b" style="left:1300px;top:501.56px;width:83px;height:24.84px;background:#c6efce;"></div>
<div class="b" style="left:1300px;top:526.4px;width:83px;height:24.84px;background:#c6efce;"></div>
<div class="b" style="left:1300px;top:551.24px;width:83px;height:24.84px;background:#c6efce;"></div>
<div class="b" style="left:1300px;top:576.0799999999999px;width:83px;height:24.84px;background:#c6efce;"></div>
<div class="b" style="left:1300px;top:600.9200000000001px;width:83px;height:24.84px;background:#c6efce;"></div>
<div class="b" style="left:1300px;top:625.76px;width:83px;height:24.84px;background:#c6efce;"></div>
<div class="b" style="left:1300px;top:650.6px;width:83px;height:24.84px;background:#c6efce;"></div>
<div class="b" style="left:1300px;top:675.44px;width:83px;height:24.84px;background:#c6efce;"></div>
<div class="b" style="left:1300px;top:700.28px;width:83px;height:24.84px;background:#c6efce;"></div>
<div class="b" style="left:1300px;top:725.12px;width:83px;height:24.84px;background:#c6efce;"></div>
<div class="b" style="left:1300px;top:790.5px;width:83px;height:24.5px;background:#c6efce;"></div>
<div class="b" style="left:1300px;top:815px;width:83px;height:25px;background:#c6efce;"></div>
<div class="b" style="left:1106px;top:840px;width:194px;height:18.5px;background:#cfcdcd;"></div>
<div class="b" style="left:1300px;top:840px;width:83px;height:18.5px;background:#c6efce;"></div>
<div class="b" style="left:1105px;top:277.375px;width:642px;height:1.25px;background:#000;"></div>
<div class="b" style="left:1105px;top:302.215px;width:642px;height:1.25px;background:#000;"></div>
<div class="b" style="left:1105px;top:326.68px;width:642px;height:2.0px;background:#000;"></div>
<div class="b" style="left:1105px;top:351.52px;width:642px;height:2.0px;background:#000;"></div>
<div class="b" style="left:1105px;top:376.36px;width:642px;height:2.0px;background:#000;"></div>
<div class="b" style="left:1105px;top:401.575px;width:642px;height:1.25px;background:#000;"></div>
<div class="b" style="left:1105px;top:426.41499999999996px;width:642px;height:1.25px;background:#000;"></div>
<div class="b" style="left:1105px;top:450.88px;width:642px;height:2.0px;background:#000;"></div>
<div class="b" style="left:1105px;top:475.72px;width:642px;height:2.0px;background:#000;"></div>
<div class="b" style="left:1105px;top:500.56px;width:642px;height:2.0px;background:#000;"></div>
<div class="b" style="left:1105px;top:525.775px;width:642px;height:1.25px;background:#000;"></div>
<div class="b" style="left:1105px;top:550.615px;width:642px;height:1.25px;background:#000;"></div>
<div class="b" style="left:1105px;top:575.0799999999999px;width:642px;height:2.0px;background:#000;"></div>
<div class="b" style="left:1105px;top:599.9200000000001px;width:642px;height:2.0px;background:#000;"></div>
<div class="b" style="left:1105px;top:624.76px;width:642px;height:2.0px;background:#000;"></div>
<div class="b" style="left:1105px;top:649.975px;width:642px;height:1.25px;background:#000;"></div>
<div class="b" style="left:1105px;top:674.815px;width:642px;height:1.25px;background:#000;"></div>
<div class="b" style="left:1105px;top:699.655px;width:642px;height:1.25px;background:#000;"></div>
<div class="b" style="left:1105px;top:724.12px;width:642px;height:2.0px;background:#000;"></div>
<div class="b" style="left:1105px;top:748.96px;width:642px;height:2.0px;background:#000;"></div>
<div class="b" style="left:1105px;top:789.875px;width:642px;height:1.25px;background:#000;"></div>
<div class="b" style="left:1105px;top:814.0px;width:642px;height:2.0px;background:#000;"></div>
<div class="b" style="left:1105px;top:839.0px;width:642px;height:2.0px;background:#000;"></div>
<div class="b" style="left:1105px;top:857.875px;width:642px;height:1.25px;background:#000;"></div>
<div class="b" style="left:1105px;top:221.8px;width:642px;height:2px;background:#000;"></div>
<div class="b" style="left:1104.6px;top:222px;width:2px;height:637px;background:#000;"></div>
<div class="b" style="left:1215.8px;top:222px;width:1.2px;height:618px;background:#000;"></div>
<div class="b" style="left:1299.6px;top:222px;width:1.2px;height:637px;background:#000;"></div>
<div class="b" style="left:1382px;top:222px;width:2.2px;height:637px;background:#000;"></div>
<div class="b" style="left:1744.6px;top:222px;width:2px;height:637px;background:#000;"></div>
<div class="b" style="left:1106.6px;top:857.4px;width:193px;height:2.4px;background:#fff;"></div>
<span class="t" style="left:1214.5px;top:177.30px;font:normal bold 16.6px/16.6px 'Liberation Sans',sans-serif;color:#000;transform:scaleX(1.0639);transform-origin:left center;">Case Manager Incentive Compensation Worksheet</span>
<span class="t" style="left:1214.5px;top:203.30px;font:normal bold 16.6px/16.6px 'Liberation Sans',sans-serif;color:#000;transform:scaleX(1.1039);transform-origin:left center;">Incentive Compensation Period: 2/23/26 - 3/22/26</span>
<span class="t" style="left:1161px;top:246.10px;transform:translateX(-50%);font:normal bold 12.4px/12.4px 'Liberation Sans',sans-serif;color:#111;letter-spacing:-0.297px;">Last Name</span>
<span class="t" style="left:1258.5px;top:246.10px;transform:translateX(-50%);font:normal bold 12.4px/12.4px 'Liberation Sans',sans-serif;color:#111;letter-spacing:-0.105px;">First Name</span>
<span class="t" style="left:1341.5px;top:237.00px;transform:translateX(-50%);font:normal bold 12.4px/12.4px 'Liberation Sans',sans-serif;color:#111;letter-spacing:-0.080px;">Incentive</span>
<span class="t" style="left:1341.5px;top:255.10px;transform:translateX(-50%);font:normal bold 12.4px/12.4px 'Liberation Sans',sans-serif;color:#111;letter-spacing:-0.203px;">Hours to Pay</span>
<span class="t" style="left:1564px;top:246.10px;transform:translateX(-50%);font:normal bold 12.4px/12.4px 'Liberation Sans',sans-serif;color:#111;letter-spacing:-0.188px;">Special Notes for this Pay Period</span>
<span class="t" style="left:1109px;top:285.47px;font:normal normal 12.7px/12.7px 'Liberation Sans',sans-serif;color:#111;transform:scaleX(0.9900);transform-origin:left center;">Backhus</span>
<span class="t" style="left:1219px;top:285.47px;font:normal normal 12.7px/12.7px 'Liberation Sans',sans-serif;color:#111;transform:scaleX(0.9900);transform-origin:left center;">Stacey</span>
<span class="t" style="left:1341.5px;top:284.62px;transform:translateX(-50%);font:normal normal 13.2px/13.2px 'Liberation Sans',sans-serif;color:#0b5d0b;transform:translateX(-50%) scaleX(0.9650);">207.00</span>
<span class="t" style="left:1109px;top:310.31px;font:normal normal 12.7px/12.7px 'Liberation Sans',sans-serif;color:#111;transform:scaleX(0.9900);transform-origin:left center;">Barbee</span>
<span class="t" style="left:1219px;top:310.31px;font:normal normal 12.7px/12.7px 'Liberation Sans',sans-serif;color:#111;transform:scaleX(0.9900);transform-origin:left center;">Ana</span>
<span class="t" style="left:1341.5px;top:309.46px;transform:translateX(-50%);font:normal normal 13.2px/13.2px 'Liberation Sans',sans-serif;color:#0b5d0b;transform:translateX(-50%) scaleX(0.9650);">213.80</span>
<span class="t" style="left:1109px;top:335.15px;font:normal normal 12.7px/12.7px 'Liberation Sans',sans-serif;color:#111;transform:scaleX(0.9900);transform-origin:left center;">Beznoska</span>
<span class="t" style="left:1219px;top:335.15px;font:normal normal 12.7px/12.7px 'Liberation Sans',sans-serif;color:#111;transform:scaleX(0.9900);transform-origin:left center;">Eva</span>
<span class="t" style="left:1341.5px;top:334.30px;transform:translateX(-50%);font:normal normal 13.2px/13.2px 'Liberation Sans',sans-serif;color:#0b5d0b;transform:translateX(-50%) scaleX(0.9650);">41.10</span>
<span class="t" style="left:1109px;top:359.99px;font:normal normal 12.7px/12.7px 'Liberation Sans',sans-serif;color:#111;transform:scaleX(0.9900);transform-origin:left center;">Bishop</span>
<span class="t" style="left:1219px;top:359.99px;font:normal normal 12.7px/12.7px 'Liberation Sans',sans-serif;color:#111;transform:scaleX(0.9900);transform-origin:left center;">Melissa</span>
<span class="t" style="left:1341.5px;top:359.14px;transform:translateX(-50%);font:normal normal 13.2px/13.2px 'Liberation Sans',sans-serif;color:#0b5d0b;transform:translateX(-50%) scaleX(0.9650);">88.30</span>
<span class="t" style="left:1109px;top:384.83px;font:normal normal 12.7px/12.7px 'Liberation Sans',sans-serif;color:#111;transform:scaleX(0.9900);transform-origin:left center;">Brickner</span>
<span class="t" style="left:1219px;top:384.83px;font:normal normal 12.7px/12.7px 'Liberation Sans',sans-serif;color:#111;transform:scaleX(0.9900);transform-origin:left center;">Amy</span>
<span class="t" style="left:1341.5px;top:383.98px;transform:translateX(-50%);font:normal normal 13.2px/13.2px 'Liberation Sans',sans-serif;color:#0b5d0b;transform:translateX(-50%) scaleX(0.9650);">153.40</span>
<span class="t" style="left:1109px;top:409.67px;font:normal normal 12.7px/12.7px 'Liberation Sans',sans-serif;color:#111;transform:scaleX(0.9900);transform-origin:left center;">Chartrand</span>
<span class="t" style="left:1219px;top:409.67px;font:normal normal 12.7px/12.7px 'Liberation Sans',sans-serif;color:#111;transform:scaleX(0.9900);transform-origin:left center;">Kyle</span>
<span class="t" style="left:1341.5px;top:408.82px;transform:translateX(-50%);font:normal normal 13.2px/13.2px 'Liberation Sans',sans-serif;color:#0b5d0b;transform:translateX(-50%) scaleX(0.9650);">111.10</span>
<span class="t" style="left:1109px;top:434.51px;font:normal normal 12.7px/12.7px 'Liberation Sans',sans-serif;color:#111;transform:scaleX(0.9900);transform-origin:left center;">Datson</span>
<span class="t" style="left:1219px;top:434.51px;font:normal normal 12.7px/12.7px 'Liberation Sans',sans-serif;color:#111;transform:scaleX(0.9900);transform-origin:left center;">Amanda</span>
<span class="t" style="left:1385.4px;top:430.19px;font:normal normal 11.7px/11.7px 'Liberation Sans',sans-serif;color:#ff0000;transform:scaleX(0.9894);transform-origin:left center;">Pay Amanda Datson $561.40 instead of incentive hours.</span>
<span class="t" style="left:1109px;top:459.35px;font:normal normal 12.7px/12.7px 'Liberation Sans',sans-serif;color:#111;transform:scaleX(0.9900);transform-origin:left center;">Fulkerson</span>
<span class="t" style="left:1219px;top:459.35px;font:normal normal 12.7px/12.7px 'Liberation Sans',sans-serif;color:#111;transform:scaleX(0.9900);transform-origin:left center;">Karen</span>
<span class="t" style="left:1341.5px;top:458.50px;transform:translateX(-50%);font:normal normal 13.2px/13.2px 'Liberation Sans',sans-serif;color:#0b5d0b;transform:translateX(-50%) scaleX(0.9650);">128.20</span>
<span class="t" style="left:1109px;top:484.19px;font:normal normal 12.7px/12.7px 'Liberation Sans',sans-serif;color:#111;transform:scaleX(0.9900);transform-origin:left center;">Glenn</span>
<span class="t" style="left:1219px;top:484.19px;font:normal normal 12.7px/12.7px 'Liberation Sans',sans-serif;color:#111;transform:scaleX(0.9900);transform-origin:left center;">April</span>
<span class="t" style="left:1341.5px;top:483.34px;transform:translateX(-50%);font:normal normal 13.2px/13.2px 'Liberation Sans',sans-serif;color:#0b5d0b;transform:translateX(-50%) scaleX(0.9650);">116.60</span>
<span class="t" style="left:1109px;top:509.03px;font:normal normal 12.7px/12.7px 'Liberation Sans',sans-serif;color:#111;transform:scaleX(0.9900);transform-origin:left center;">Gunness</span>
<span class="t" style="left:1219px;top:509.03px;font:normal normal 12.7px/12.7px 'Liberation Sans',sans-serif;color:#111;transform:scaleX(0.9900);transform-origin:left center;">Laurie</span>
<span class="t" style="left:1341.5px;top:508.18px;transform:translateX(-50%);font:normal normal 13.2px/13.2px 'Liberation Sans',sans-serif;color:#0b5d0b;transform:translateX(-50%) scaleX(0.9650);">106.90</span>
<span class="t" style="left:1109px;top:533.87px;font:normal normal 12.7px/12.7px 'Liberation Sans',sans-serif;color:#111;transform:scaleX(0.9900);transform-origin:left center;">Holbird</span>
<span class="t" style="left:1219px;top:533.87px;font:normal normal 12.7px/12.7px 'Liberation Sans',sans-serif;color:#111;transform:scaleX(0.9900);transform-origin:left center;">Katie</span>
<span class="t" style="left:1341.5px;top:533.02px;transform:translateX(-50%);font:normal normal 13.2px/13.2px 'Liberation Sans',sans-serif;color:#0b5d0b;transform:translateX(-50%) scaleX(0.9650);">202.40</span>
<span class="t" style="left:1109px;top:558.71px;font:normal normal 12.7px/12.7px 'Liberation Sans',sans-serif;color:#111;transform:scaleX(0.9900);transform-origin:left center;">Johnson</span>
<span class="t" style="left:1219px;top:558.71px;font:normal normal 12.7px/12.7px 'Liberation Sans',sans-serif;color:#111;transform:scaleX(0.9900);transform-origin:left center;">Cynthia</span>
<span class="t" style="left:1341.5px;top:557.86px;transform:translateX(-50%);font:normal normal 13.2px/13.2px 'Liberation Sans',sans-serif;color:#0b5d0b;transform:translateX(-50%) scaleX(0.9650);">48.20</span>
<span class="t" style="left:1385.4px;top:554.39px;font:normal normal 11.7px/11.7px 'Liberation Sans',sans-serif;color:#ff0000;transform:scaleX(0.9868);transform-origin:left center;">12.3 of non-bill approved by Bruce Stubbs.</span>
<span class="t" style="left:1109px;top:583.55px;font:normal normal 12.7px/12.7px 'Liberation Sans',sans-serif;color:#111;transform:scaleX(0.9900);transform-origin:left center;">Keeler</span>
<span class="t" style="left:1219px;top:583.55px;font:normal normal 12.7px/12.7px 'Liberation Sans',sans-serif;color:#111;transform:scaleX(0.9900);transform-origin:left center;">Tina</span>
<span class="t" style="left:1341.5px;top:582.70px;transform:translateX(-50%);font:normal normal 13.2px/13.2px 'Liberation Sans',sans-serif;color:#0b5d0b;transform:translateX(-50%) scaleX(0.9650);">166.20</span>
<span class="t" style="left:1109px;top:608.39px;font:normal normal 12.7px/12.7px 'Liberation Sans',sans-serif;color:#111;transform:scaleX(0.9900);transform-origin:left center;">Largent</span>
<span class="t" style="left:1219px;top:608.39px;font:normal normal 12.7px/12.7px 'Liberation Sans',sans-serif;color:#111;transform:scaleX(0.9900);transform-origin:left center;">Lorraine</span>
<span class="t" style="left:1341.5px;top:607.54px;transform:translateX(-50%);font:normal normal 13.2px/13.2px 'Liberation Sans',sans-serif;color:#0b5d0b;transform:translateX(-50%) scaleX(0.9650);">0.90</span>
<span class="t" style="left:1109px;top:633.23px;font:normal normal 12.7px/12.7px 'Liberation Sans',sans-serif;color:#111;transform:scaleX(0.9900);transform-origin:left center;">Maldonado</span>
<span class="t" style="left:1219px;top:633.23px;font:normal normal 12.7px/12.7px 'Liberation Sans',sans-serif;color:#111;transform:scaleX(0.9900);transform-origin:left center;">Marlena</span>
<span class="t" style="left:1341.5px;top:632.38px;transform:translateX(-50%);font:normal normal 13.2px/13.2px 'Liberation Sans',sans-serif;color:#0b5d0b;transform:translateX(-50%) scaleX(0.9650);">60.70</span>
<span class="t" style="left:1109px;top:658.07px;font:normal normal 12.7px/12.7px 'Liberation Sans',sans-serif;color:#111;transform:scaleX(0.9900);transform-origin:left center;">Maloney</span>
<span class="t" style="left:1219px;top:658.07px;font:normal normal 12.7px/12.7px 'Liberation Sans',sans-serif;color:#111;transform:scaleX(0.9900);transform-origin:left center;">Lori</span>
<span class="t" style="left:1341.5px;top:657.22px;transform:translateX(-50%);font:normal normal 13.2px/13.2px 'Liberation Sans',sans-serif;color:#0b5d0b;transform:translateX(-50%) scaleX(0.9650);">4.60</span>
<span class="t" style="left:1109px;top:682.91px;font:normal normal 12.7px/12.7px 'Liberation Sans',sans-serif;color:#111;transform:scaleX(0.9900);transform-origin:left center;">Oudman</span>
<span class="t" style="left:1219px;top:682.91px;font:normal normal 12.7px/12.7px 'Liberation Sans',sans-serif;color:#111;transform:scaleX(0.9900);transform-origin:left center;">Brooke</span>
<span class="t" style="left:1341.5px;top:682.06px;transform:translateX(-50%);font:normal normal 13.2px/13.2px 'Liberation Sans',sans-serif;color:#0b5d0b;transform:translateX(-50%) scaleX(0.9650);">46.30</span>
<span class="t" style="left:1109px;top:707.75px;font:normal normal 12.7px/12.7px 'Liberation Sans',sans-serif;color:#111;transform:scaleX(0.9900);transform-origin:left center;">Rigato</span>
<span class="t" style="left:1219px;top:707.75px;font:normal normal 12.7px/12.7px 'Liberation Sans',sans-serif;color:#111;transform:scaleX(0.9900);transform-origin:left center;">Theresa</span>
<span class="t" style="left:1341.5px;top:706.90px;transform:translateX(-50%);font:normal normal 13.2px/13.2px 'Liberation Sans',sans-serif;color:#0b5d0b;transform:translateX(-50%) scaleX(0.9650);">248.70</span>
<span class="t" style="left:1385.4px;top:703.43px;font:normal normal 11.7px/11.7px 'Liberation Sans',sans-serif;color:#ff0000;transform:scaleX(1.0060);transform-origin:left center;">3.2 hours billed on incorrect file.</span>
<span class="t" style="left:1109px;top:732.59px;font:normal normal 12.7px/12.7px 'Liberation Sans',sans-serif;color:#111;transform:scaleX(0.9900);transform-origin:left center;">Santer</span>
<span class="t" style="left:1219px;top:732.59px;font:normal normal 12.7px/12.7px 'Liberation Sans',sans-serif;color:#111;transform:scaleX(0.9900);transform-origin:left center;">Patricia</span>
<span class="t" style="left:1341.5px;top:731.74px;transform:translateX(-50%);font:normal normal 13.2px/13.2px 'Liberation Sans',sans-serif;color:#0b5d0b;transform:translateX(-50%) scaleX(0.9650);">29.40</span>
<span class="t" style="left:1385.4px;top:728.27px;font:normal normal 11.7px/11.7px 'Liberation Sans',sans-serif;color:#ff0000;transform:scaleX(0.9852);transform-origin:left center;">Goal hours were reduced to 120 for Pay 3.</span>
<span class="t" style="left:1109px;top:765.15px;font:normal normal 12.7px/12.7px 'Liberation Sans',sans-serif;color:#111;transform:scaleX(0.9900);transform-origin:left center;">Soyluer</span>
<span class="t" style="left:1219px;top:765.15px;font:normal normal 12.7px/12.7px 'Liberation Sans',sans-serif;color:#111;transform:scaleX(0.9900);transform-origin:left center;">Nurcan</span>
<span class="t" style="left:1341.5px;top:764.30px;transform:translateX(-50%);font:normal normal 13.2px/13.2px 'Liberation Sans',sans-serif;color:#111;transform:translateX(-50%) scaleX(0.9650);">0.00</span>
<span class="t" style="left:1385.4px;top:753.45px;font:normal normal 11.7px/11.7px 'Liberation Sans',sans-serif;color:#ff0000;transform:scaleX(1.0166);transform-origin:left center;">Start date 1/26/26. 90 day probationary period, not eligible for</span>
<span class="t" style="left:1385.4px;top:769.45px;font:normal normal 11.7px/11.7px 'Liberation Sans',sans-serif;color:#ff0000;transform:scaleX(0.9914);transform-origin:left center;">incentive pay.</span>
<span class="t" style="left:1109px;top:797.80px;font:normal normal 12.7px/12.7px 'Liberation Sans',sans-serif;color:#111;transform:scaleX(0.9900);transform-origin:left center;">Tebedo</span>
<span class="t" style="left:1219px;top:797.80px;font:normal normal 12.7px/12.7px 'Liberation Sans',sans-serif;color:#111;transform:scaleX(0.9900);transform-origin:left center;">Meghan</span>
<span class="t" style="left:1341.5px;top:796.95px;transform:translateX(-50%);font:normal normal 13.2px/13.2px 'Liberation Sans',sans-serif;color:#0b5d0b;transform:translateX(-50%) scaleX(0.9650);">179.90</span>
<span class="t" style="left:1109px;top:822.55px;font:normal normal 12.7px/12.7px 'Liberation Sans',sans-serif;color:#111;transform:scaleX(0.9900);transform-origin:left center;">Wurzinger</span>
<span class="t" style="left:1219px;top:822.55px;font:normal normal 12.7px/12.7px 'Liberation Sans',sans-serif;color:#111;transform:scaleX(0.9900);transform-origin:left center;">Heidi</span>
<span class="t" style="left:1341.5px;top:821.70px;transform:translateX(-50%);font:normal normal 13.2px/13.2px 'Liberation Sans',sans-serif;color:#0b5d0b;transform:translateX(-50%) scaleX(0.9650);">125.20</span>
<span class="t" style="left:1341.5px;top:843.20px;transform:translateX(-50%);font:normal normal 13.2px/13.2px 'Liberation Sans',sans-serif;color:#0b5d0b;transform:translateX(-50%) scaleX(0.9650);">2290.80</span>
<span class="t" style="left:1109px;top:861.90px;font:normal normal 13.2px/13.2px 'Liberation Sans',sans-serif;color:#111;transform:scaleX(0.9789);transform-origin:left center;">Print Date:</span>
<span class="t" style="left:1219px;top:861.90px;font:normal normal 13.2px/13.2px 'Liberation Sans',sans-serif;color:#111;transform:scaleX(1.0482);transform-origin:left center;">3/23/2026</span>
<!-- acro_side -->
<svg class="b" style="left:1878px;top:123px;" width="24" height="24" viewBox="0 0 24 24"><g fill="none" stroke="#5b4bd6" stroke-width="2" stroke-linejoin="round"><path d="M13 5 H4.5 Q2.5 5 2.5 7 V18 Q2.5 20 4.5 20 H19 Q21 20 21 18 V12"/><path d="M6 10 H10 M6 15.5 H13"/></g><path d="M18.5 1 L19.6 4.4 L23 5.5 L19.6 6.6 L18.5 10 L17.4 6.6 L14 5.5 L17.4 4.4Z" fill="none" stroke="#5b4bd6" stroke-width="1.2"/><circle cx="13" cy="11" r="1.2" fill="#5b4bd6"/></svg>
<div class="b" style="left:1876px;top:162px;width:29px;height:1px;background:#e3e3e3;"></div>
<svg class="b" style="left:1878px;top:178px;" width="24" height="22" viewBox="0 0 24 22"><g fill="none" stroke="#222" stroke-width="2"><path d="M14 2.5 A7.3 7.3 0 1 1 14 17 H7.5 Q6.8 17 6.8 16 V9.7 A7.2 7.2 0 0 1 14 2.5Z"/><path d="M11 8 H17.5 M11 11.5 H16"/><path d="M3 8 A8 8 0 0 0 3 16 Q4 19.5 8 20 H13"/></g></svg>
<svg class="b" style="left:1878px;top:226px;" width="24" height="24" viewBox="0 0 24 24"><g fill="none" stroke="#222" stroke-width="2.1" stroke-linejoin="round"><path d="M3 2.5 H13 V21 L8 17 L3 21Z"/><path d="M16.5 5 H22 M16.5 8.5 H22 M16.5 12 H22" stroke-width="1.4"/></g></svg>
<svg class="b" style="left:1878px;top:275px;" width="24" height="24" viewBox="0 0 24 24"><g fill="none" stroke="#222" stroke-width="2.1" stroke-linejoin="round"><path d="M4 17 V4.5 Q4 2.5 6 2.5 H13"/><path d="M8.5 6.5 H15.5 L20.5 11.5 V20.5 Q20.5 22 19 22 H10 Q8.5 22 8.5 20.5Z"/><path d="M15.5 6.5 V11.5 H20.5"/></g></svg>
<div class="b" style="left:1870px;top:667px;width:39px;height:40px;background:#fff;border:1px solid #cfcfcf;border-radius:5px;box-sizing:border-box;"></div>
<svg class="b" style="left:1883px;top:774px;" width="14" height="10" viewBox="0 0 14 10"><path d="M1.5 8 L7 2.5 L12.5 8" fill="none" stroke="#8e8e8e" stroke-width="2.5"/></svg>
<svg class="b" style="left:1883px;top:817px;" width="14" height="10" viewBox="0 0 14 10"><path d="M1.5 2 L7 7.5 L12.5 2" fill="none" stroke="#222" stroke-width="2.5"/></svg>
<div class="b" style="left:1869px;top:845px;width:41px;height:1px;background:#e3e3e3;"></div>
<svg class="b" style="left:1879.7px;top:860px;" width="24" height="24" viewBox="0 0 24 24"><path d="M19.5 12 A8 8 0 1 1 16.5 5.7" fill="none" stroke="#222" stroke-width="2.1"/><path d="M14.5 6.5 H20 V1" fill="none" stroke="#222" stroke-width="2.1"/></svg>
<svg class="b" style="left:1880.2px;top:904.5px;" width="22" height="24" viewBox="0 0 22 24"><path d="M3 3 Q3 1.5 4.5 1.5 H12 L18 7.5 V20 Q18 21.5 16.5 21.5 H4.5 Q3 21.5 3 20Z M12 1.5 V7.5 H18" fill="none" stroke="#222" stroke-width="2" stroke-linejoin="round"/></svg>
<svg class="b" style="left:1900px;top:923.5px;" width="6" height="6" viewBox="0 0 6 6"><path d="M6 0 V6 H0Z" fill="#222"/></svg>
<svg class="b" style="left:1881px;top:951.8px;" width="22" height="22" viewBox="0 0 22 22"><circle cx="9" cy="9" r="6.8" fill="none" stroke="#222" stroke-width="2.1"/><path d="M14 14 L21 21" stroke="#222" stroke-width="2"/><path d="M5.8 9 H12.2" stroke="#222" stroke-width="1.6"/><path d="M9 5.8 V12.2" stroke="#222" stroke-width="1.6"/></svg>
<svg class="b" style="left:1881px;top:997.8px;" width="22" height="22" viewBox="0 0 22 22"><circle cx="9" cy="9" r="6.8" fill="none" stroke="#222" stroke-width="2.1"/><path d="M14 14 L21 21" stroke="#222" stroke-width="2"/><path d="M5.8 9 H12.2" stroke="#222" stroke-width="1.6"/></svg>
<div class="b" style="left:1794.3px;top:486px;width:50px;height:368px;background:#fff;border:1px solid #c8c8c8;border-radius:6px;box-sizing:border-box;"></div>
<div class="b" style="left:1800px;top:491px;width:40px;height:5px;background:#c9c9c9;border-radius:3px;"></div>
<div class="b" style="left:1799px;top:507px;width:40px;height:40px;background:#0d66d0;border-radius:5px;"></div>
<svg class="b" style="left:1810px;top:515px;" width="18" height="22" viewBox="0 0 18 22"><path d="M3 1.5 V16.5 L7 13 L10 19.5 L12.6 18.3 L9.7 12 L14.5 11.6Z" fill="#fff"/></svg>
<svg class="b" style="left:1830px;top:537px;" width="6" height="6" viewBox="0 0 6 6"><path d="M6 0 V6 H0Z" fill="#fff"/></svg>
<svg class="b" style="left:1807px;top:565px;" width="24" height="24" viewBox="0 0 24 24"><g fill="none" stroke="#222" stroke-width="2.1"><path d="M12 2.5 A9 9 0 1 0 12 20.5 H21 V11.5 A9 9 0 0 0 12 2.5Z"/><path d="M7.5 9 H16.5 M7.5 13 H14"/></g></svg>
<svg class="b" style="left:1829px;top:586px;" width="6" height="6" viewBox="0 0 6 6"><path d="M6 0 V6 H0Z" fill="#222"/></svg>
<svg class="b" style="left:1806px;top:613px;" width="26" height="26" viewBox="0 0 26 26"><g fill="none" stroke="#222" stroke-width="2.1" stroke-linejoin="round"><path d="M17.5 3 L23 8.5 L12 19.5 L6.5 14Z"/></g><path d="M6 15 L11 20 L4 21.5 L2.5 20Z" fill="#222"/><path d="M13 20.5 H22 L19.5 24.5 H10Z" fill="#9b9b9b"/></svg>
<svg class="b" style="left:1829px;top:636px;" width="6" height="6" viewBox="0 0 6 6"><path d="M6 0 V6 H0Z" fill="#222"/></svg>
<svg class="b" style="left:1806px;top:665px;" width="26" height="24" viewBox="0 0 26 24"><path d="M15.5 13.5 C20 14 23.5 11 21.5 7.5 C19 3 5 3.5 4 10.5 C3.3 17 11 19.5 18 18.5" fill="none" stroke="#222" stroke-width="2.1" stroke-linecap="round"/></svg>
<svg class="b" style="left:1829px;top:686px;" width="6" height="6" viewBox="0 0 6 6"><path d="M6 0 V6 H0Z" fill="#222"/></svg>
<svg class="b" style="left:1808px;top:716px;" width="22" height="22" viewBox="0 0 22 22"><rect x="1.5" y="1.5" width="19" height="19" fill="none" stroke="#222" stroke-width="2.1" stroke-dasharray="2.6 1.7"/></svg>
<svg class="b" style="left:1829px;top:736px;" width="6" height="6" viewBox="0 0 6 6"><path d="M6 0 V6 H0Z" fill="#222"/></svg>
<svg class="b" style="left:1806px;top:764px;" width="26" height="26" viewBox="0 0 26 26"><g fill="none" stroke="#222" stroke-width="2.1" stroke-linejoin="round" stroke-linecap="round"><path d="M3 22 C3 14 6 8 13 4 L19.5 10.5 C16 18 11 21 3 22Z"/><path d="M3 22 L10.5 14.5"/><path d="M13 4 L15 2 L21.5 8.5 L19.5 10.5"/><path d="M17 20 C18.5 17 20 17 20 19 C20 21 22 20.5 23.5 19.5"/></g></svg>
<svg class="b" style="left:1829px;top:786px;" width="6" height="6" viewBox="0 0 6 6"><path d="M6 0 V6 H0Z" fill="#222"/></svg>
<svg class="b" style="left:1809px;top:825px;" width="20" height="4" viewBox="0 0 20 4"><circle cx="2" cy="2" r="1.3" fill="#222"/><circle cx="10" cy="2" r="1.3" fill="#222"/><circle cx="18" cy="2" r="1.3" fill="#222"/></svg>
<div class="b" style="left:1001px;top:1px;width:40px;height:1030px;background:linear-gradient(90deg,rgba(0,0,0,0.17),rgba(0,0,0,0.07) 35%,rgba(0,0,0,0.02) 70%,rgba(0,0,0,0));z-index:3;"></div>
<span class="t" style="left:1889px;top:678.75px;transform:translateX(-50%);font:normal normal 14.5px/14.5px 'Liberation Sans',sans-serif;color:#222;">1</span>
<span class="t" style="left:1889px;top:723.75px;transform:translateX(-50%);font:normal normal 14.5px/14.5px 'Liberation Sans',sans-serif;color:#222;">2</span>
<span class="t" style="left:1890.7px;top:914.70px;transform:translateX(-50%);font:normal bold 7.8px/7.8px 'Liberation Sans',sans-serif;color:#222;">1:1</span>
<span class="t" style="left:1819px;top:720.00px;transform:translateX(-50%);font:normal bold 15px/15px 'Liberation Sans',sans-serif;color:#222;">A</span>
<!-- taskbar -->
<div class="b" style="left:0px;top:1032px;width:1920px;height:48px;background:#eeeeee;"></div>
<svg class="b" style="left:18px;top:1044px;" width="28" height="24" viewBox="0 0 28 24"><circle cx="19" cy="7" r="5" fill="#f0a23a"/><path d="M5 20 A4.5 4.5 0 0 1 6 11.2 A6.5 6.5 0 0 1 18.4 10.6 A4.8 4.8 0 0 1 19.5 20Z" fill="#dfe8fb" stroke="#9db6ea" stroke-width="1"/></svg>
<div class="b" style="left:30px;top:1038px;width:16px;height:16px;background:#c42b1c;border-radius:8px;"></div>
<div class="b" style="left:551px;top:1045px;width:11px;height:11px;background:#1590e0;"></div>
<div class="b" style="left:563px;top:1045px;width:11px;height:11px;background:#1590e0;"></div>
<div class="b" style="left:551px;top:1057px;width:11px;height:11px;background:#1590e0;"></div>
<div class="b" style="left:563px;top:1057px;width:11px;height:11px;background:#1590e0;"></div>
<div class="b" style="left:588px;top:1040px;width:219px;height:32px;background:#fbfbfb;border:1px solid #dddddd;border-radius:16px;box-sizing:border-box;"></div>
<svg class="b" style="left:598px;top:1048px;" width="16" height="16" viewBox="0 0 16 16"><circle cx="6.5" cy="6.5" r="5" fill="none" stroke="#222" stroke-width="1.6"/><path d="M10.2 10.2 L14.5 14.5" stroke="#222" stroke-width="1.8"/></svg>
<svg class="b" style="left:818px;top:1043px;" width="26" height="26" viewBox="0 0 26 26"><defs><linearGradient id="tvg" x1="0" y1="0" x2="1" y2="1"><stop offset="0" stop-color="#fdfdfd"/><stop offset="1" stop-color="#d9d9d9"/></linearGradient></defs><rect x="1" y="7.8" width="18" height="16.2" rx="1.2" fill="#1c1c1c"/><rect x="6.6" y="1.5" width="18.2" height="16.1" rx="1" fill="url(#tvg)" fill-opacity="0.86"/></svg>
<svg class="b" style="left:862px;top:1043px;" width="26" height="26" viewBox="0 0 26 26"><path d="M1 3.6 Q1 2 2.6 2 H9.4 L11.6 4.6 H1Z" fill="#e5a100"/><path d="M1 4.6 H23.4 Q25 4.6 25 6.2 V21.8 Q25 23.4 23.4 23.4 H2.6 Q1 23.4 1 21.8Z" fill="#ffcf48"/><path d="M1 6 L11 6 L12.5 4.6 H25" fill="none" stroke="#ffe08a" stroke-width="0.8"/><path d="M5 23.4 V18.6 Q5 16.6 7 16.6 H18.4 Q20.4 16.6 20.4 18.6 V23.4Z" fill="#0f7fd6"/><rect x="8.5" y="19.2" width="8.4" height="1.8" rx="0.9" fill="#0a67b8"/></svg>
<div class="b" style="left:872.0px;top:1072px;width:6px;height:3px;background:#8a8a8a;border-radius:2px;"></div>
<svg class="b" style="left:906px;top:1043px;" width="26" height="26" viewBox="0 0 26 26"><defs><linearGradient id="edg" x1="0" y1="0" x2="1" y2="0.4"><stop offset="0" stop-color="#1689d6"/><stop offset="0.55" stop-color="#23b6c0"/><stop offset="1" stop-color="#62d84e"/></linearGradient></defs><path d="M1.5 13 A11.8 11.8 0 0 1 25 11.5 C25.3 16 21.5 17.8 18.3 17 C15.8 16.3 16.2 14 17 13 C17.5 10.5 15 8.6 12.4 8.8 C8 9.2 5.6 13.6 7 18 Z" fill="url(#edg)"/><path d="M7 13 C5.5 18 9 24 15 24.6 C19 25 22.4 23 24 20.4 C21 22 16.5 21.6 14 19 C12 17 11.6 14.4 12.6 12.6 C10.6 11.6 8 11.8 7 13Z" fill="#0c59a4"/><path d="M12.6 12.6 C13 10.4 15.4 9.6 17 10.8 C17.6 12 17 13.4 16.6 14.6 C16.8 16.6 19 17.6 21 17.2 C18.4 18.6 13.4 17.6 12.6 12.6Z" fill="#fff"/><rect x="0.8" y="16.6" width="12.2" height="8.6" rx="1" fill="#c47a16"/><path d="M4.4 16.6 V15 H9.4 V16.6" fill="none" stroke="#3a2a10" stroke-width="1.2"/><rect x="0.8" y="19.6" width="12.2" height="1.2" fill="#8f5410"/><rect x="6" y="19.2" width="1.8" height="2" fill="#ffd86b"/></svg>
<div class="b" style="left:915.0px;top:1072px;width:6px;height:3px;background:#8a8a8a;border-radius:2px;"></div>
<div class="b" style="left:943px;top:1036px;width:40px;height:40px;background:#eeb2ae;border-radius:5px;"></div>
<div class="b" style="left:947px;top:1072px;width:32px;height:3.2px;background:#c42b1c;border-radius:2px;"></div>
<svg class="b" style="left:948px;top:1042px;" width="28" height="28" viewBox="0 0 28 28"><circle cx="11.8" cy="4.6" r="3.4" fill="#7b83eb"/><rect x="7.5" y="11" width="13" height="14" rx="3" fill="#5b5fc7"/><path d="M17.5 11 H24.6 Q25.6 11 25.6 12 V18.4 A4.2 4.2 0 0 1 17.5 20Z" fill="#7a6ff0"/><rect x="3" y="12.6" width="10.4" height="10.4" rx="1.4" fill="#444bb0"/></svg>
<div class="b" style="left:964px;top:1039px;width:16.4px;height:16.4px;background:#c42b1c;border-radius:9px;"></div>
<svg class="b" style="left:994px;top:1043px;" width="28" height="28" viewBox="0 0 28 28"><defs><linearGradient id="rdg" x1="0" y1="0" x2="1" y2="0.3"><stop offset="0" stop-color="#0a22c4"/><stop offset="0.55" stop-color="#3b5be6"/><stop offset="1" stop-color="#dfe6ff"/></linearGradient></defs><ellipse cx="11" cy="22" rx="7" ry="2.6" fill="#c9c9c9"/><path d="M9 17 L13 17.6 L13.4 21.6 L8.4 21.2Z" fill="#dcdcdc"/><path d="M2.2 2 L22 4.4 L21 18.6 L4 16.4Z" fill="#b8c0d8"/><path d="M3.4 3.2 L20.8 5.4 L20 17.4 L5 15.4Z" fill="url(#rdg)"/><circle cx="19" cy="19.4" r="5.6" fill="#e6e6e6" stroke="#9a9a9a" stroke-width="0.9"/><path d="M16 17.2 L18.2 19.4 L16 21.6 M22 17.2 L19.8 19.4 L22 21.6" fill="none" stroke="#2d8a2d" stroke-width="1.4"/></svg>
<svg class="b" style="left:1038px;top:1043px;" width="26" height="26" viewBox="0 0 26 26"><circle cx="13" cy="13" r="11.2" fill="#fff" stroke="#0d5bb5" stroke-width="2.1"/><path d="M18.2 8.4 A7 7 0 1 0 18.2 17.6" fill="none" stroke="#0d5bb5" stroke-width="3.6"/><circle cx="13" cy="13" r="3.1" fill="#0d5bb5"/><path d="M13 13 H22" stroke="#0d5bb5" stroke-width="2.6"/><path d="M0.6 13 H4.2 M21.8 11.2 H25.4 M21.8 14.8 H25.4" stroke="#fff" stroke-width="1.1"/></svg>
<div class="b" style="left:1080px;top:1037px;width:34px;height:38px;background:#f4f4f4;border-radius:5px;border:1px solid #e4e4e4;box-sizing:border-box;"></div>
<div class="b" style="left:1076px;top:1036.5px;width:34px;height:39px;background:#f8f8f8;border-radius:5px;border:1px solid #e6e6e6;box-sizing:border-box;"></div>
<svg class="b" style="left:1082.5px;top:1043.5px;" width="25" height="25" viewBox="0 0 25 25"><circle cx="12.5" cy="12.5" r="12.2" fill="#fbc116"/><path d="M12.5 12.5 L1.93 6.4 A12.2 12.2 0 0 1 23.07 6.4Z" fill="#e33b2e"/><path d="M12.5 12.5 L1.93 6.4 A12.2 12.2 0 0 0 12.5 24.7 Z" fill="#2da94f"/><path d="M12.5 0.3 A12.2 12.2 0 0 1 23.07 6.4 H12.5Z" fill="#e33b2e"/><path d="M12.5 12.5 L17.9 15.6 L12.5 24.7 A12.2 12.2 0 0 1 1.93 6.4 Z" fill="#2da94f"/><circle cx="12.5" cy="12.5" r="5.8" fill="#fff"/><circle cx="12.5" cy="12.5" r="4.6" fill="#1a73e8"/></svg>
<div class="b" style="left:1087px;top:1072px;width:16px;height:3.2px;background:#1a6fd6;border-radius:2px;"></div>
<svg class="b" style="left:1125px;top:1039px;" width="30" height="30" viewBox="0 0 30 30"><defs><linearGradient id="olg" x1="0" y1="0" x2="1" y2="1"><stop offset="0" stop-color="#2aa5ee"/><stop offset="1" stop-color="#45c6ff"/></linearGradient></defs><path d="M4 14 L17 6.4 L25 11 V26 Q25 28 23 28 H6 Q4 28 4 26Z" fill="url(#olg)"/><path d="M8 17 L20 10.5 L25 13.4 L12 21Z" fill="#1466d4"/><path d="M4 22 L25 13.4 V26 Q25 28 23 28 H6 Q4 28 4 26Z" fill="#3bbcf7" fill-opacity="0.85"/><rect x="2" y="16" width="11.4" height="11.4" rx="2" fill="#1253c4"/><circle cx="23" cy="8" r="7.4" fill="#4fc3f7"/><rect x="19" y="5.2" width="8" height="5.8" rx="0.8" fill="none" stroke="#111" stroke-width="1.1"/><path d="M19 5.6 L23 8.6 L27 5.6" fill="none" stroke="#111" stroke-width="1.1"/></svg>
<div class="b" style="left:1135.0px;top:1072px;width:6px;height:3px;background:#8a8a8a;border-radius:2px;"></div>
<svg class="b" style="left:1169px;top:1043px;" width="27" height="26" viewBox="0 0 27 26"><defs><linearGradient id="ong" x1="0" y1="0" x2="0" y2="1"><stop offset="0" stop-color="#e27af5"/><stop offset="0.5" stop-color="#c552e6"/><stop offset="1" stop-color="#8a2fb8"/></linearGradient></defs><path d="M6.5 3 Q6.5 1.5 8 1.5 H24 Q25.5 1.5 25.5 3 V22.5 Q25.5 24 24 24 H8 Q6.5 24 6.5 22.5Z" fill="url(#ong)"/><path d="M17 7.5 H25.5 V12 H17Z" fill="#d86af0"/><rect x="1.6" y="10.4" width="12" height="12" rx="2" fill="#7a1fa2"/></svg>
<div class="b" style="left:1178.0px;top:1072px;width:6px;height:3px;background:#8a8a8a;border-radius:2px;"></div>
<svg class="b" style="left:1216.5px;top:1045px;" width="21" height="21" viewBox="0 0 21 21"><defs><linearGradient id="qg" x1="0" y1="0" x2="0" y2="1"><stop offset="0" stop-color="#4414b4"/><stop offset="1" stop-color="#22075c"/></linearGradient></defs><path d="M5 0.4 H16 L20.6 5 V16 L16 20.6 H5 L0.4 16 V5Z" fill="url(#qg)" stroke="url(#qg)" stroke-width="0.8" stroke-linejoin="round"/><path d="M13.6 8.4 A4.2 4.2 0 1 0 11 13.4 M11.6 9.6 C13 10.4 12.6 13.6 14.4 14.6 C15.2 15 16 14.4 16 13.6" fill="none" stroke="#f3e8ff" stroke-width="2.5" stroke-linecap="round"/><g fill="#e9d8ff"><circle cx="4.4" cy="4.6" r="0.7"/><circle cx="16.2" cy="4.4" r="0.8"/><circle cx="3.8" cy="11.8" r="0.6"/><circle cx="7.4" cy="3" r="0.5"/><circle cx="5" cy="15.2" r="0.6"/></g></svg>
<div class="b" style="left:1224.0px;top:1072px;width:6px;height:3px;background:#8a8a8a;border-radius:2px;"></div>
<svg class="b" style="left:1258px;top:1043px;" width="24" height="26" viewBox="0 0 24 26"><defs><linearGradient id="xg" x1="0" y1="0" x2="1" y2="1"><stop offset="0" stop-color="#2f9a46"/><stop offset="1" stop-color="#14602a"/></linearGradient></defs><path d="M4 3.4 Q4 1.6 5.8 1.6 H20.2 Q22 1.6 22 3.4 V22 Q22 23.8 20.2 23.8 H5.8 Q4 23.8 4 22Z" fill="url(#xg)"/><path d="M4 3.4 Q4 1.6 5.8 1.6 H13 V9.4 H4Z" fill="#7bd660"/><path d="M13 1.6 H20.2 Q22 1.6 22 3.4 V7.6 H13Z" fill="#92e36e"/><path d="M13 7.6 H22 V9.4 H13Z" fill="#5cc052"/><rect x="1" y="11" width="10.4" height="11.4" rx="2" fill="#107c41"/></svg>
<div class="b" style="left:1268.0px;top:1072px;width:6px;height:3px;background:#8a8a8a;border-radius:2px;"></div>
<svg class="b" style="left:1306px;top:1044px;" width="19" height="24" viewBox="0 0 19 24"><rect x="0.3" y="0.3" width="18" height="23.6" rx="1.2" fill="#6d7986"/><rect x="2.4" y="2.2" width="14" height="4.2" fill="#38c9f2"/><rect x="3.0" y="9.4" width="3.6" height="3.6" fill="#c8d2de"/><rect x="8.2" y="9.4" width="3.6" height="3.6" fill="#c8d2de"/><rect x="13.4" y="9.4" width="3.6" height="3.6" fill="#c8d2de"/><rect x="3.0" y="14.4" width="3.6" height="3.6" fill="#c8d2de"/><rect x="8.2" y="14.4" width="3.6" height="3.6" fill="#c8d2de"/><rect x="3.0" y="19.4" width="3.6" height="3.6" fill="#c8d2de"/><rect x="8.2" y="19.4" width="3.6" height="3.6" fill="#c8d2de"/><rect x="13.4" y="14.4" width="3.6" height="8.6" fill="#0f4a8a"/></svg>
<div class="b" style="left:1312.0px;top:1072px;width:6px;height:3px;background:#8a8a8a;border-radius:2px;"></div>
<svg class="b" style="left:1348px;top:1045px;" width="21.5" height="21" viewBox="0 0 21.5 21"><rect x="0.2" y="0.2" width="21" height="20.6" rx="5" fill="#b30b00"/><path d="M5.6 15.4 C8.6 13.6 10.4 9.4 10.6 5.8 C10.7 4 12.3 4 12.2 5.8 C12 9 13.8 12.2 17 13.2 C18.2 13.6 17.8 15 16.4 14.6 C12.6 13.4 8.6 14 6.4 16.4 C5.4 17.4 4.4 16.2 5.6 15.4Z" fill="none" stroke="#fff" stroke-width="1.35"/></svg>
<div class="b" style="left:1355.5px;top:1072px;width:6px;height:3px;background:#8a8a8a;border-radius:2px;"></div>
<svg class="b" style="left:1699px;top:1052px;" width="12" height="8" viewBox="0 0 12 8"><path d="M1 7 L6 1.5 L11 7" fill="none" stroke="#222" stroke-width="1.4"/></svg>
<svg class="b" style="left:1730px;top:1046px;" width="14" height="20" viewBox="0 0 14 20"><rect x="4" y="1" width="6" height="11" rx="3" fill="none" stroke="#1a6fd6" stroke-width="1.5"/><path d="M1.5 9.5 A5.5 5.5 0 0 0 12.5 9.5 M7 15 V18.5" fill="none" stroke="#1a6fd6" stroke-width="1.4"/></svg>
<svg class="b" style="left:1760px;top:1048px;" width="18" height="16" viewBox="0 0 18 16"><g fill="none" stroke="#222" stroke-width="1.4"><path d="M1.5 6.5 A10.5 10.5 0 0 1 16.5 6.5"/><path d="M4 9.3 A7 7 0 0 1 14 9.3"/><path d="M6.5 12 A3.6 3.6 0 0 1 11.5 12"/></g><circle cx="9" cy="14" r="1.2" fill="#222"/></svg>
<svg class="b" style="left:1784px;top:1048px;" width="20" height="16" viewBox="0 0 20 16"><path d="M1.5 6 H4.5 L8.5 2.5 V13.5 L4.5 10 H1.5Z" fill="none" stroke="#222" stroke-width="1.3" stroke-linejoin="round"/><g fill="none" stroke="#222" stroke-width="1.3"><path d="M11 5.5 A3.5 3.5 0 0 1 11 10.5"/><path d="M13.3 3.5 A6.3 6.3 0 0 1 13.3 12.5"/><path d="M15.6 1.7 A9 9 0 0 1 15.6 14.3"/></g></svg>
<svg class="b" style="left:1808px;top:1049px;" width="22" height="14" viewBox="0 0 22 14"><rect x="1" y="2.5" width="18" height="10" rx="2.2" fill="#0f8a0f" stroke="#222" stroke-width="1.2"/><rect x="19.6" y="5.5" width="1.8" height="4" fill="#222"/><path d="M8 5.5 L11.5 5.5 L10.5 7.5 L13 7.5 L9 11.5 L10 8.8 L7.5 8.8Z" fill="#fff"/><path d="M8 0 L11 3 H5Z" fill="#222"/></svg>
<span class="t" style="left:38px;top:1040.80px;transform:translateX(-50%);font:normal normal 11px/11px 'Liberation Sans',sans-serif;color:#fff;">1</span>
<span class="t" style="left:50px;top:1041.90px;font:normal normal 12.2px/12.2px 'Liberation Sans',sans-serif;color:#111;letter-spacing:-0.469px;">35°F</span>
<span class="t" style="left:50px;top:1057.90px;font:normal normal 12.2px/12.2px 'Liberation Sans',sans-serif;color:#555;letter-spacing:0.167px;">Mostly cloudy</span>
<span class="t" style="left:624px;top:1049.50px;font:normal normal 14px/14px 'Liberation Sans',sans-serif;color:#555;letter-spacing:-0.560px;">Search</span>
<span class="t" style="left:956.2px;top:1055.70px;transform:translateX(-50%);font:normal bold 8.4px/8.4px 'Liberation Sans',sans-serif;color:#fff;">T</span>
<span class="t" style="left:972.2px;top:1041.75px;transform:translateX(-50%);font:normal normal 11.5px/11.5px 'Liberation Sans',sans-serif;color:#fff;">1</span>
<span class="t" style="left:1132.7px;top:1056.60px;transform:translateX(-50%);font:normal bold 8.6px/8.6px 'Liberation Sans',sans-serif;color:#fff;">O</span>
<span class="t" style="left:1176.7px;top:1055.10px;transform:translateX(-50%);font:normal bold 9.4px/9.4px 'Liberation Sans',sans-serif;color:#fff;">N</span>
<span class="t" style="left:1264.2px;top:1055.40px;transform:translateX(-50%);font:normal bold 9px/9px 'Liberation Sans',sans-serif;color:#fff;">X</span>
<span class="t" style="right:19px;top:1042.20px;font:normal normal 12.2px/12.2px 'Liberation Sans',sans-serif;color:#111;">11:27 AM</span>
<span class="t" style="right:19px;top:1057.90px;font:normal normal 12.2px/12.2px 'Liberation Sans',sans-serif;color:#111;">3/24/2026</span>
<div class="b" style="left:0px;top:0px;width:1920px;height:1px;background:#7b7b7b;"></div><div class="b" style="left:0px;top:0px;width:1px;height:1031px;background:#7b7b7b;"></div><div class="b" style="left:999.3px;top:0px;width:1.8px;height:1031px;background:#6f6f6f;"></div><div class="b" style="left:0px;top:1030.5px;width:1920px;height:1.5px;background:#808080;"></div><div class="b" style="left:1919px;top:0px;width:1px;height:1031px;background:#6f6f6f;"></div>
</body></html>
